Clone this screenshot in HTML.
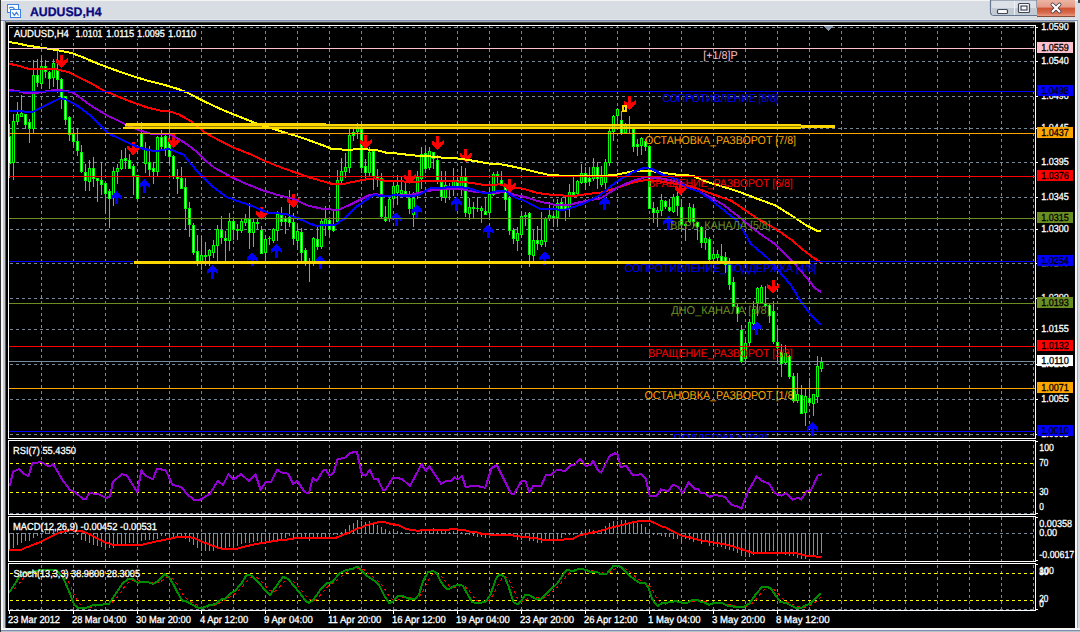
<!DOCTYPE html>
<html><head><meta charset="utf-8"><style>
html,body{margin:0;padding:0;background:#000;width:1080px;height:632px;overflow:hidden}
svg{position:absolute;left:0;top:0;font-family:"Liberation Sans", sans-serif;text-rendering:geometricPrecision}
</style></head><body>
<svg width="1080" height="632" viewBox="0 0 1080 632" shape-rendering="crispEdges">
<defs><clipPath id="mainclip"><rect x="9" y="26" width="1026" height="412"/></clipPath><clipPath id="rsiclip"><rect x="9" y="441" width="1026" height="73"/></clipPath><clipPath id="macdclip"><rect x="9" y="517" width="1026" height="44"/></clipPath><clipPath id="stoclip"><rect x="9" y="564" width="1026" height="46"/></clipPath></defs>
<rect x="0" y="0" width="1080" height="632" fill="#000"/>
<line x1="41.5" y1="26" x2="41.5" y2="438" stroke="#778899" stroke-width="1" stroke-dasharray="3 3" stroke-dashoffset="1"/>
<line x1="41.5" y1="441" x2="41.5" y2="514" stroke="#778899" stroke-width="1" stroke-dasharray="3 3" stroke-dashoffset="2"/>
<line x1="41.5" y1="517" x2="41.5" y2="561" stroke="#778899" stroke-width="1" stroke-dasharray="3 3" stroke-dashoffset="0"/>
<line x1="41.5" y1="564" x2="41.5" y2="610" stroke="#778899" stroke-width="1" stroke-dasharray="3 3" stroke-dashoffset="5"/>
<line x1="73.5" y1="26" x2="73.5" y2="438" stroke="#778899" stroke-width="1" stroke-dasharray="3 3" stroke-dashoffset="1"/>
<line x1="73.5" y1="441" x2="73.5" y2="514" stroke="#778899" stroke-width="1" stroke-dasharray="3 3" stroke-dashoffset="2"/>
<line x1="73.5" y1="517" x2="73.5" y2="561" stroke="#778899" stroke-width="1" stroke-dasharray="3 3" stroke-dashoffset="0"/>
<line x1="73.5" y1="564" x2="73.5" y2="610" stroke="#778899" stroke-width="1" stroke-dasharray="3 3" stroke-dashoffset="5"/>
<line x1="105.5" y1="26" x2="105.5" y2="438" stroke="#778899" stroke-width="1" stroke-dasharray="3 3" stroke-dashoffset="1"/>
<line x1="105.5" y1="441" x2="105.5" y2="514" stroke="#778899" stroke-width="1" stroke-dasharray="3 3" stroke-dashoffset="2"/>
<line x1="105.5" y1="517" x2="105.5" y2="561" stroke="#778899" stroke-width="1" stroke-dasharray="3 3" stroke-dashoffset="0"/>
<line x1="105.5" y1="564" x2="105.5" y2="610" stroke="#778899" stroke-width="1" stroke-dasharray="3 3" stroke-dashoffset="5"/>
<line x1="137.5" y1="26" x2="137.5" y2="438" stroke="#778899" stroke-width="1" stroke-dasharray="3 3" stroke-dashoffset="1"/>
<line x1="137.5" y1="441" x2="137.5" y2="514" stroke="#778899" stroke-width="1" stroke-dasharray="3 3" stroke-dashoffset="2"/>
<line x1="137.5" y1="517" x2="137.5" y2="561" stroke="#778899" stroke-width="1" stroke-dasharray="3 3" stroke-dashoffset="0"/>
<line x1="137.5" y1="564" x2="137.5" y2="610" stroke="#778899" stroke-width="1" stroke-dasharray="3 3" stroke-dashoffset="5"/>
<line x1="169.5" y1="26" x2="169.5" y2="438" stroke="#778899" stroke-width="1" stroke-dasharray="3 3" stroke-dashoffset="1"/>
<line x1="169.5" y1="441" x2="169.5" y2="514" stroke="#778899" stroke-width="1" stroke-dasharray="3 3" stroke-dashoffset="2"/>
<line x1="169.5" y1="517" x2="169.5" y2="561" stroke="#778899" stroke-width="1" stroke-dasharray="3 3" stroke-dashoffset="0"/>
<line x1="169.5" y1="564" x2="169.5" y2="610" stroke="#778899" stroke-width="1" stroke-dasharray="3 3" stroke-dashoffset="5"/>
<line x1="201.5" y1="26" x2="201.5" y2="438" stroke="#778899" stroke-width="1" stroke-dasharray="3 3" stroke-dashoffset="1"/>
<line x1="201.5" y1="441" x2="201.5" y2="514" stroke="#778899" stroke-width="1" stroke-dasharray="3 3" stroke-dashoffset="2"/>
<line x1="201.5" y1="517" x2="201.5" y2="561" stroke="#778899" stroke-width="1" stroke-dasharray="3 3" stroke-dashoffset="0"/>
<line x1="201.5" y1="564" x2="201.5" y2="610" stroke="#778899" stroke-width="1" stroke-dasharray="3 3" stroke-dashoffset="5"/>
<line x1="233.5" y1="26" x2="233.5" y2="438" stroke="#778899" stroke-width="1" stroke-dasharray="3 3" stroke-dashoffset="1"/>
<line x1="233.5" y1="441" x2="233.5" y2="514" stroke="#778899" stroke-width="1" stroke-dasharray="3 3" stroke-dashoffset="2"/>
<line x1="233.5" y1="517" x2="233.5" y2="561" stroke="#778899" stroke-width="1" stroke-dasharray="3 3" stroke-dashoffset="0"/>
<line x1="233.5" y1="564" x2="233.5" y2="610" stroke="#778899" stroke-width="1" stroke-dasharray="3 3" stroke-dashoffset="5"/>
<line x1="265.5" y1="26" x2="265.5" y2="438" stroke="#778899" stroke-width="1" stroke-dasharray="3 3" stroke-dashoffset="1"/>
<line x1="265.5" y1="441" x2="265.5" y2="514" stroke="#778899" stroke-width="1" stroke-dasharray="3 3" stroke-dashoffset="2"/>
<line x1="265.5" y1="517" x2="265.5" y2="561" stroke="#778899" stroke-width="1" stroke-dasharray="3 3" stroke-dashoffset="0"/>
<line x1="265.5" y1="564" x2="265.5" y2="610" stroke="#778899" stroke-width="1" stroke-dasharray="3 3" stroke-dashoffset="5"/>
<line x1="297.5" y1="26" x2="297.5" y2="438" stroke="#778899" stroke-width="1" stroke-dasharray="3 3" stroke-dashoffset="1"/>
<line x1="297.5" y1="441" x2="297.5" y2="514" stroke="#778899" stroke-width="1" stroke-dasharray="3 3" stroke-dashoffset="2"/>
<line x1="297.5" y1="517" x2="297.5" y2="561" stroke="#778899" stroke-width="1" stroke-dasharray="3 3" stroke-dashoffset="0"/>
<line x1="297.5" y1="564" x2="297.5" y2="610" stroke="#778899" stroke-width="1" stroke-dasharray="3 3" stroke-dashoffset="5"/>
<line x1="329.5" y1="26" x2="329.5" y2="438" stroke="#778899" stroke-width="1" stroke-dasharray="3 3" stroke-dashoffset="1"/>
<line x1="329.5" y1="441" x2="329.5" y2="514" stroke="#778899" stroke-width="1" stroke-dasharray="3 3" stroke-dashoffset="2"/>
<line x1="329.5" y1="517" x2="329.5" y2="561" stroke="#778899" stroke-width="1" stroke-dasharray="3 3" stroke-dashoffset="0"/>
<line x1="329.5" y1="564" x2="329.5" y2="610" stroke="#778899" stroke-width="1" stroke-dasharray="3 3" stroke-dashoffset="5"/>
<line x1="361.5" y1="26" x2="361.5" y2="438" stroke="#778899" stroke-width="1" stroke-dasharray="3 3" stroke-dashoffset="1"/>
<line x1="361.5" y1="441" x2="361.5" y2="514" stroke="#778899" stroke-width="1" stroke-dasharray="3 3" stroke-dashoffset="2"/>
<line x1="361.5" y1="517" x2="361.5" y2="561" stroke="#778899" stroke-width="1" stroke-dasharray="3 3" stroke-dashoffset="0"/>
<line x1="361.5" y1="564" x2="361.5" y2="610" stroke="#778899" stroke-width="1" stroke-dasharray="3 3" stroke-dashoffset="5"/>
<line x1="393.5" y1="26" x2="393.5" y2="438" stroke="#778899" stroke-width="1" stroke-dasharray="3 3" stroke-dashoffset="1"/>
<line x1="393.5" y1="441" x2="393.5" y2="514" stroke="#778899" stroke-width="1" stroke-dasharray="3 3" stroke-dashoffset="2"/>
<line x1="393.5" y1="517" x2="393.5" y2="561" stroke="#778899" stroke-width="1" stroke-dasharray="3 3" stroke-dashoffset="0"/>
<line x1="393.5" y1="564" x2="393.5" y2="610" stroke="#778899" stroke-width="1" stroke-dasharray="3 3" stroke-dashoffset="5"/>
<line x1="425.5" y1="26" x2="425.5" y2="438" stroke="#778899" stroke-width="1" stroke-dasharray="3 3" stroke-dashoffset="1"/>
<line x1="425.5" y1="441" x2="425.5" y2="514" stroke="#778899" stroke-width="1" stroke-dasharray="3 3" stroke-dashoffset="2"/>
<line x1="425.5" y1="517" x2="425.5" y2="561" stroke="#778899" stroke-width="1" stroke-dasharray="3 3" stroke-dashoffset="0"/>
<line x1="425.5" y1="564" x2="425.5" y2="610" stroke="#778899" stroke-width="1" stroke-dasharray="3 3" stroke-dashoffset="5"/>
<line x1="457.5" y1="26" x2="457.5" y2="438" stroke="#778899" stroke-width="1" stroke-dasharray="3 3" stroke-dashoffset="1"/>
<line x1="457.5" y1="441" x2="457.5" y2="514" stroke="#778899" stroke-width="1" stroke-dasharray="3 3" stroke-dashoffset="2"/>
<line x1="457.5" y1="517" x2="457.5" y2="561" stroke="#778899" stroke-width="1" stroke-dasharray="3 3" stroke-dashoffset="0"/>
<line x1="457.5" y1="564" x2="457.5" y2="610" stroke="#778899" stroke-width="1" stroke-dasharray="3 3" stroke-dashoffset="5"/>
<line x1="489.5" y1="26" x2="489.5" y2="438" stroke="#778899" stroke-width="1" stroke-dasharray="3 3" stroke-dashoffset="1"/>
<line x1="489.5" y1="441" x2="489.5" y2="514" stroke="#778899" stroke-width="1" stroke-dasharray="3 3" stroke-dashoffset="2"/>
<line x1="489.5" y1="517" x2="489.5" y2="561" stroke="#778899" stroke-width="1" stroke-dasharray="3 3" stroke-dashoffset="0"/>
<line x1="489.5" y1="564" x2="489.5" y2="610" stroke="#778899" stroke-width="1" stroke-dasharray="3 3" stroke-dashoffset="5"/>
<line x1="521.5" y1="26" x2="521.5" y2="438" stroke="#778899" stroke-width="1" stroke-dasharray="3 3" stroke-dashoffset="1"/>
<line x1="521.5" y1="441" x2="521.5" y2="514" stroke="#778899" stroke-width="1" stroke-dasharray="3 3" stroke-dashoffset="2"/>
<line x1="521.5" y1="517" x2="521.5" y2="561" stroke="#778899" stroke-width="1" stroke-dasharray="3 3" stroke-dashoffset="0"/>
<line x1="521.5" y1="564" x2="521.5" y2="610" stroke="#778899" stroke-width="1" stroke-dasharray="3 3" stroke-dashoffset="5"/>
<line x1="553.5" y1="26" x2="553.5" y2="438" stroke="#778899" stroke-width="1" stroke-dasharray="3 3" stroke-dashoffset="1"/>
<line x1="553.5" y1="441" x2="553.5" y2="514" stroke="#778899" stroke-width="1" stroke-dasharray="3 3" stroke-dashoffset="2"/>
<line x1="553.5" y1="517" x2="553.5" y2="561" stroke="#778899" stroke-width="1" stroke-dasharray="3 3" stroke-dashoffset="0"/>
<line x1="553.5" y1="564" x2="553.5" y2="610" stroke="#778899" stroke-width="1" stroke-dasharray="3 3" stroke-dashoffset="5"/>
<line x1="585.5" y1="26" x2="585.5" y2="438" stroke="#778899" stroke-width="1" stroke-dasharray="3 3" stroke-dashoffset="1"/>
<line x1="585.5" y1="441" x2="585.5" y2="514" stroke="#778899" stroke-width="1" stroke-dasharray="3 3" stroke-dashoffset="2"/>
<line x1="585.5" y1="517" x2="585.5" y2="561" stroke="#778899" stroke-width="1" stroke-dasharray="3 3" stroke-dashoffset="0"/>
<line x1="585.5" y1="564" x2="585.5" y2="610" stroke="#778899" stroke-width="1" stroke-dasharray="3 3" stroke-dashoffset="5"/>
<line x1="617.5" y1="26" x2="617.5" y2="438" stroke="#778899" stroke-width="1" stroke-dasharray="3 3" stroke-dashoffset="1"/>
<line x1="617.5" y1="441" x2="617.5" y2="514" stroke="#778899" stroke-width="1" stroke-dasharray="3 3" stroke-dashoffset="2"/>
<line x1="617.5" y1="517" x2="617.5" y2="561" stroke="#778899" stroke-width="1" stroke-dasharray="3 3" stroke-dashoffset="0"/>
<line x1="617.5" y1="564" x2="617.5" y2="610" stroke="#778899" stroke-width="1" stroke-dasharray="3 3" stroke-dashoffset="5"/>
<line x1="649.5" y1="26" x2="649.5" y2="438" stroke="#778899" stroke-width="1" stroke-dasharray="3 3" stroke-dashoffset="1"/>
<line x1="649.5" y1="441" x2="649.5" y2="514" stroke="#778899" stroke-width="1" stroke-dasharray="3 3" stroke-dashoffset="2"/>
<line x1="649.5" y1="517" x2="649.5" y2="561" stroke="#778899" stroke-width="1" stroke-dasharray="3 3" stroke-dashoffset="0"/>
<line x1="649.5" y1="564" x2="649.5" y2="610" stroke="#778899" stroke-width="1" stroke-dasharray="3 3" stroke-dashoffset="5"/>
<line x1="681.5" y1="26" x2="681.5" y2="438" stroke="#778899" stroke-width="1" stroke-dasharray="3 3" stroke-dashoffset="1"/>
<line x1="681.5" y1="441" x2="681.5" y2="514" stroke="#778899" stroke-width="1" stroke-dasharray="3 3" stroke-dashoffset="2"/>
<line x1="681.5" y1="517" x2="681.5" y2="561" stroke="#778899" stroke-width="1" stroke-dasharray="3 3" stroke-dashoffset="0"/>
<line x1="681.5" y1="564" x2="681.5" y2="610" stroke="#778899" stroke-width="1" stroke-dasharray="3 3" stroke-dashoffset="5"/>
<line x1="713.5" y1="26" x2="713.5" y2="438" stroke="#778899" stroke-width="1" stroke-dasharray="3 3" stroke-dashoffset="1"/>
<line x1="713.5" y1="441" x2="713.5" y2="514" stroke="#778899" stroke-width="1" stroke-dasharray="3 3" stroke-dashoffset="2"/>
<line x1="713.5" y1="517" x2="713.5" y2="561" stroke="#778899" stroke-width="1" stroke-dasharray="3 3" stroke-dashoffset="0"/>
<line x1="713.5" y1="564" x2="713.5" y2="610" stroke="#778899" stroke-width="1" stroke-dasharray="3 3" stroke-dashoffset="5"/>
<line x1="745.5" y1="26" x2="745.5" y2="438" stroke="#778899" stroke-width="1" stroke-dasharray="3 3" stroke-dashoffset="1"/>
<line x1="745.5" y1="441" x2="745.5" y2="514" stroke="#778899" stroke-width="1" stroke-dasharray="3 3" stroke-dashoffset="2"/>
<line x1="745.5" y1="517" x2="745.5" y2="561" stroke="#778899" stroke-width="1" stroke-dasharray="3 3" stroke-dashoffset="0"/>
<line x1="745.5" y1="564" x2="745.5" y2="610" stroke="#778899" stroke-width="1" stroke-dasharray="3 3" stroke-dashoffset="5"/>
<line x1="777.5" y1="26" x2="777.5" y2="438" stroke="#778899" stroke-width="1" stroke-dasharray="3 3" stroke-dashoffset="1"/>
<line x1="777.5" y1="441" x2="777.5" y2="514" stroke="#778899" stroke-width="1" stroke-dasharray="3 3" stroke-dashoffset="2"/>
<line x1="777.5" y1="517" x2="777.5" y2="561" stroke="#778899" stroke-width="1" stroke-dasharray="3 3" stroke-dashoffset="0"/>
<line x1="777.5" y1="564" x2="777.5" y2="610" stroke="#778899" stroke-width="1" stroke-dasharray="3 3" stroke-dashoffset="5"/>
<line x1="809.5" y1="26" x2="809.5" y2="438" stroke="#778899" stroke-width="1" stroke-dasharray="3 3" stroke-dashoffset="1"/>
<line x1="809.5" y1="441" x2="809.5" y2="514" stroke="#778899" stroke-width="1" stroke-dasharray="3 3" stroke-dashoffset="2"/>
<line x1="809.5" y1="517" x2="809.5" y2="561" stroke="#778899" stroke-width="1" stroke-dasharray="3 3" stroke-dashoffset="0"/>
<line x1="809.5" y1="564" x2="809.5" y2="610" stroke="#778899" stroke-width="1" stroke-dasharray="3 3" stroke-dashoffset="5"/>
<line x1="841.5" y1="26" x2="841.5" y2="438" stroke="#778899" stroke-width="1" stroke-dasharray="3 3" stroke-dashoffset="1"/>
<line x1="841.5" y1="441" x2="841.5" y2="514" stroke="#778899" stroke-width="1" stroke-dasharray="3 3" stroke-dashoffset="2"/>
<line x1="841.5" y1="517" x2="841.5" y2="561" stroke="#778899" stroke-width="1" stroke-dasharray="3 3" stroke-dashoffset="0"/>
<line x1="841.5" y1="564" x2="841.5" y2="610" stroke="#778899" stroke-width="1" stroke-dasharray="3 3" stroke-dashoffset="5"/>
<line x1="873.5" y1="26" x2="873.5" y2="438" stroke="#778899" stroke-width="1" stroke-dasharray="3 3" stroke-dashoffset="1"/>
<line x1="873.5" y1="441" x2="873.5" y2="514" stroke="#778899" stroke-width="1" stroke-dasharray="3 3" stroke-dashoffset="2"/>
<line x1="873.5" y1="517" x2="873.5" y2="561" stroke="#778899" stroke-width="1" stroke-dasharray="3 3" stroke-dashoffset="0"/>
<line x1="873.5" y1="564" x2="873.5" y2="610" stroke="#778899" stroke-width="1" stroke-dasharray="3 3" stroke-dashoffset="5"/>
<line x1="905.5" y1="26" x2="905.5" y2="438" stroke="#778899" stroke-width="1" stroke-dasharray="3 3" stroke-dashoffset="1"/>
<line x1="905.5" y1="441" x2="905.5" y2="514" stroke="#778899" stroke-width="1" stroke-dasharray="3 3" stroke-dashoffset="2"/>
<line x1="905.5" y1="517" x2="905.5" y2="561" stroke="#778899" stroke-width="1" stroke-dasharray="3 3" stroke-dashoffset="0"/>
<line x1="905.5" y1="564" x2="905.5" y2="610" stroke="#778899" stroke-width="1" stroke-dasharray="3 3" stroke-dashoffset="5"/>
<line x1="937.5" y1="26" x2="937.5" y2="438" stroke="#778899" stroke-width="1" stroke-dasharray="3 3" stroke-dashoffset="1"/>
<line x1="937.5" y1="441" x2="937.5" y2="514" stroke="#778899" stroke-width="1" stroke-dasharray="3 3" stroke-dashoffset="2"/>
<line x1="937.5" y1="517" x2="937.5" y2="561" stroke="#778899" stroke-width="1" stroke-dasharray="3 3" stroke-dashoffset="0"/>
<line x1="937.5" y1="564" x2="937.5" y2="610" stroke="#778899" stroke-width="1" stroke-dasharray="3 3" stroke-dashoffset="5"/>
<line x1="969.5" y1="26" x2="969.5" y2="438" stroke="#778899" stroke-width="1" stroke-dasharray="3 3" stroke-dashoffset="1"/>
<line x1="969.5" y1="441" x2="969.5" y2="514" stroke="#778899" stroke-width="1" stroke-dasharray="3 3" stroke-dashoffset="2"/>
<line x1="969.5" y1="517" x2="969.5" y2="561" stroke="#778899" stroke-width="1" stroke-dasharray="3 3" stroke-dashoffset="0"/>
<line x1="969.5" y1="564" x2="969.5" y2="610" stroke="#778899" stroke-width="1" stroke-dasharray="3 3" stroke-dashoffset="5"/>
<line x1="1001.5" y1="26" x2="1001.5" y2="438" stroke="#778899" stroke-width="1" stroke-dasharray="3 3" stroke-dashoffset="1"/>
<line x1="1001.5" y1="441" x2="1001.5" y2="514" stroke="#778899" stroke-width="1" stroke-dasharray="3 3" stroke-dashoffset="2"/>
<line x1="1001.5" y1="517" x2="1001.5" y2="561" stroke="#778899" stroke-width="1" stroke-dasharray="3 3" stroke-dashoffset="0"/>
<line x1="1001.5" y1="564" x2="1001.5" y2="610" stroke="#778899" stroke-width="1" stroke-dasharray="3 3" stroke-dashoffset="5"/>
<line x1="1033.5" y1="26" x2="1033.5" y2="438" stroke="#778899" stroke-width="1" stroke-dasharray="3 3" stroke-dashoffset="1"/>
<line x1="1033.5" y1="441" x2="1033.5" y2="514" stroke="#778899" stroke-width="1" stroke-dasharray="3 3" stroke-dashoffset="2"/>
<line x1="1033.5" y1="517" x2="1033.5" y2="561" stroke="#778899" stroke-width="1" stroke-dasharray="3 3" stroke-dashoffset="0"/>
<line x1="1033.5" y1="564" x2="1033.5" y2="610" stroke="#778899" stroke-width="1" stroke-dasharray="3 3" stroke-dashoffset="5"/>
<line x1="9" y1="27.5" x2="1035" y2="27.5" stroke="#778899" stroke-width="1" stroke-dasharray="3 3" stroke-dashoffset="5"/>
<line x1="9" y1="61.5" x2="1035" y2="61.5" stroke="#778899" stroke-width="1" stroke-dasharray="3 3" stroke-dashoffset="5"/>
<line x1="9" y1="96.5" x2="1035" y2="96.5" stroke="#778899" stroke-width="1" stroke-dasharray="3 3" stroke-dashoffset="5"/>
<line x1="9" y1="128.5" x2="1035" y2="128.5" stroke="#778899" stroke-width="1" stroke-dasharray="3 3" stroke-dashoffset="5"/>
<line x1="9" y1="162.5" x2="1035" y2="162.5" stroke="#778899" stroke-width="1" stroke-dasharray="3 3" stroke-dashoffset="5"/>
<line x1="9" y1="197.5" x2="1035" y2="197.5" stroke="#778899" stroke-width="1" stroke-dasharray="3 3" stroke-dashoffset="5"/>
<line x1="9" y1="229.5" x2="1035" y2="229.5" stroke="#778899" stroke-width="1" stroke-dasharray="3 3" stroke-dashoffset="5"/>
<line x1="9" y1="263.5" x2="1035" y2="263.5" stroke="#778899" stroke-width="1" stroke-dasharray="3 3" stroke-dashoffset="5"/>
<line x1="9" y1="298.5" x2="1035" y2="298.5" stroke="#778899" stroke-width="1" stroke-dasharray="3 3" stroke-dashoffset="5"/>
<line x1="9" y1="329.5" x2="1035" y2="329.5" stroke="#778899" stroke-width="1" stroke-dasharray="3 3" stroke-dashoffset="5"/>
<line x1="9" y1="364.5" x2="1035" y2="364.5" stroke="#778899" stroke-width="1" stroke-dasharray="3 3" stroke-dashoffset="5"/>
<line x1="9" y1="399.5" x2="1035" y2="399.5" stroke="#778899" stroke-width="1" stroke-dasharray="3 3" stroke-dashoffset="5"/>
<line x1="9" y1="434.5" x2="1035" y2="434.5" stroke="#778899" stroke-width="1" stroke-dasharray="3 3" stroke-dashoffset="5"/>
<line x1="9" y1="513.5" x2="1035" y2="513.5" stroke="#778899" stroke-width="1" stroke-dasharray="3 3" stroke-dashoffset="5"/>
<line x1="9" y1="533.5" x2="1035" y2="533.5" stroke="#778899" stroke-width="1" stroke-dasharray="3 3" stroke-dashoffset="5"/>
<line x1="9" y1="609.5" x2="1035" y2="609.5" stroke="#778899" stroke-width="1" stroke-dasharray="3 3" stroke-dashoffset="5"/>
<line x1="9" y1="463.5" x2="1035" y2="463.5" stroke="#FFFF00" stroke-width="1" stroke-dasharray="3 3" stroke-dashoffset="5"/>
<line x1="9" y1="492.5" x2="1035" y2="492.5" stroke="#FFFF00" stroke-width="1" stroke-dasharray="3 3" stroke-dashoffset="5"/>
<line x1="9" y1="573.5" x2="1035" y2="573.5" stroke="#FFFF00" stroke-width="1" stroke-dasharray="3 3" stroke-dashoffset="5"/>
<line x1="9" y1="600.5" x2="1035" y2="600.5" stroke="#FFFF00" stroke-width="1" stroke-dasharray="3 3" stroke-dashoffset="5"/>
<line x1="9" y1="361.5" x2="1035" y2="361.5" stroke="#778899" stroke-width="1"/>
<line x1="1036" y1="27.5" x2="1038" y2="27.5" stroke="#FFFFFF" stroke-width="1"/>
<text x="1041.3" y="30" fill="#FFFFFF" font-size="10.2" font-weight="normal" text-anchor="start" textLength="27.6" lengthAdjust="spacingAndGlyphs" stroke="#FFFFFF" stroke-width="0.3">1.0590</text>
<line x1="1036" y1="61.5" x2="1038" y2="61.5" stroke="#FFFFFF" stroke-width="1"/>
<text x="1041.3" y="64" fill="#FFFFFF" font-size="10.2" font-weight="normal" text-anchor="start" textLength="27.6" lengthAdjust="spacingAndGlyphs" stroke="#FFFFFF" stroke-width="0.3">1.0540</text>
<line x1="1036" y1="96.5" x2="1038" y2="96.5" stroke="#FFFFFF" stroke-width="1"/>
<text x="1041.3" y="99" fill="#FFFFFF" font-size="10.2" font-weight="normal" text-anchor="start" textLength="27.6" lengthAdjust="spacingAndGlyphs" stroke="#FFFFFF" stroke-width="0.3">1.0490</text>
<line x1="1036" y1="128.5" x2="1038" y2="128.5" stroke="#FFFFFF" stroke-width="1"/>
<text x="1041.3" y="131" fill="#FFFFFF" font-size="10.2" font-weight="normal" text-anchor="start" textLength="27.6" lengthAdjust="spacingAndGlyphs" stroke="#FFFFFF" stroke-width="0.3">1.0445</text>
<line x1="1036" y1="162.5" x2="1038" y2="162.5" stroke="#FFFFFF" stroke-width="1"/>
<text x="1041.3" y="165" fill="#FFFFFF" font-size="10.2" font-weight="normal" text-anchor="start" textLength="27.6" lengthAdjust="spacingAndGlyphs" stroke="#FFFFFF" stroke-width="0.3">1.0395</text>
<line x1="1036" y1="197.5" x2="1038" y2="197.5" stroke="#FFFFFF" stroke-width="1"/>
<text x="1041.3" y="200" fill="#FFFFFF" font-size="10.2" font-weight="normal" text-anchor="start" textLength="27.6" lengthAdjust="spacingAndGlyphs" stroke="#FFFFFF" stroke-width="0.3">1.0345</text>
<line x1="1036" y1="229.5" x2="1038" y2="229.5" stroke="#FFFFFF" stroke-width="1"/>
<text x="1041.3" y="232" fill="#FFFFFF" font-size="10.2" font-weight="normal" text-anchor="start" textLength="27.6" lengthAdjust="spacingAndGlyphs" stroke="#FFFFFF" stroke-width="0.3">1.0300</text>
<line x1="1036" y1="263.5" x2="1038" y2="263.5" stroke="#FFFFFF" stroke-width="1"/>
<text x="1041.3" y="266" fill="#FFFFFF" font-size="10.2" font-weight="normal" text-anchor="start" textLength="27.6" lengthAdjust="spacingAndGlyphs" stroke="#FFFFFF" stroke-width="0.3">1.0250</text>
<line x1="1036" y1="298.5" x2="1038" y2="298.5" stroke="#FFFFFF" stroke-width="1"/>
<text x="1041.3" y="301" fill="#FFFFFF" font-size="10.2" font-weight="normal" text-anchor="start" textLength="27.6" lengthAdjust="spacingAndGlyphs" stroke="#FFFFFF" stroke-width="0.3">1.0200</text>
<line x1="1036" y1="329.5" x2="1038" y2="329.5" stroke="#FFFFFF" stroke-width="1"/>
<text x="1041.3" y="332" fill="#FFFFFF" font-size="10.2" font-weight="normal" text-anchor="start" textLength="27.6" lengthAdjust="spacingAndGlyphs" stroke="#FFFFFF" stroke-width="0.3">1.0155</text>
<line x1="1036" y1="364.5" x2="1038" y2="364.5" stroke="#FFFFFF" stroke-width="1"/>
<text x="1041.3" y="367" fill="#FFFFFF" font-size="10.2" font-weight="normal" text-anchor="start" textLength="27.6" lengthAdjust="spacingAndGlyphs" stroke="#FFFFFF" stroke-width="0.3">1.0105</text>
<line x1="1036" y1="399.5" x2="1038" y2="399.5" stroke="#FFFFFF" stroke-width="1"/>
<text x="1041.3" y="402" fill="#FFFFFF" font-size="10.2" font-weight="normal" text-anchor="start" textLength="27.6" lengthAdjust="spacingAndGlyphs" stroke="#FFFFFF" stroke-width="0.3">1.0055</text>
<line x1="1036" y1="434.5" x2="1038" y2="434.5" stroke="#FFFFFF" stroke-width="1"/>
<text x="1041.3" y="437" fill="#FFFFFF" font-size="10.2" font-weight="normal" text-anchor="start" textLength="27.6" lengthAdjust="spacingAndGlyphs" stroke="#FFFFFF" stroke-width="0.3">1.0005</text>
<rect x="1037" y="42" width="36" height="11" fill="#FFC0CB"/>
<text x="1041.3" y="51" fill="#000000" font-size="10.2" font-weight="normal" text-anchor="start" textLength="27.6" lengthAdjust="spacingAndGlyphs" stroke="#000000" stroke-width="0.3">1.0559</text>
<rect x="1037" y="85" width="36" height="11" fill="#0000FF"/>
<text x="1041.3" y="94" fill="#000000" font-size="10.2" font-weight="normal" text-anchor="start" textLength="27.6" lengthAdjust="spacingAndGlyphs" stroke="#000000" stroke-width="0.3">1.0498</text>
<rect x="1037" y="127" width="36" height="11" fill="#FFA500"/>
<text x="1041.3" y="136" fill="#000000" font-size="10.2" font-weight="normal" text-anchor="start" textLength="27.6" lengthAdjust="spacingAndGlyphs" stroke="#000000" stroke-width="0.3">1.0437</text>
<rect x="1037" y="170" width="36" height="11" fill="#FF0000"/>
<text x="1041.3" y="179" fill="#000000" font-size="10.2" font-weight="normal" text-anchor="start" textLength="27.6" lengthAdjust="spacingAndGlyphs" stroke="#000000" stroke-width="0.3">1.0376</text>
<rect x="1037" y="212" width="36" height="11" fill="#6B8E23"/>
<text x="1041.3" y="221" fill="#000000" font-size="10.2" font-weight="normal" text-anchor="start" textLength="27.6" lengthAdjust="spacingAndGlyphs" stroke="#000000" stroke-width="0.3">1.0315</text>
<rect x="1037" y="255" width="36" height="11" fill="#0000FF"/>
<text x="1041.3" y="264" fill="#000000" font-size="10.2" font-weight="normal" text-anchor="start" textLength="27.6" lengthAdjust="spacingAndGlyphs" stroke="#000000" stroke-width="0.3">1.0254</text>
<rect x="1037" y="297" width="36" height="11" fill="#6B8E23"/>
<text x="1041.3" y="306" fill="#000000" font-size="10.2" font-weight="normal" text-anchor="start" textLength="27.6" lengthAdjust="spacingAndGlyphs" stroke="#000000" stroke-width="0.3">1.0193</text>
<rect x="1037" y="340" width="36" height="11" fill="#FF0000"/>
<text x="1041.3" y="349" fill="#000000" font-size="10.2" font-weight="normal" text-anchor="start" textLength="27.6" lengthAdjust="spacingAndGlyphs" stroke="#000000" stroke-width="0.3">1.0132</text>
<rect x="1037" y="382" width="36" height="11" fill="#FFA500"/>
<text x="1041.3" y="391" fill="#000000" font-size="10.2" font-weight="normal" text-anchor="start" textLength="27.6" lengthAdjust="spacingAndGlyphs" stroke="#000000" stroke-width="0.3">1.0071</text>
<rect x="1037" y="425" width="36" height="11" fill="#0000FF"/>
<text x="1041.3" y="434" fill="#000000" font-size="10.2" font-weight="normal" text-anchor="start" textLength="27.6" lengthAdjust="spacingAndGlyphs" stroke="#000000" stroke-width="0.3">1.0010</text>
<rect x="1037" y="355" width="36" height="11" fill="#FFFFFF"/>
<text x="1041.3" y="364" fill="#000000" font-size="10.2" font-weight="normal" text-anchor="start" textLength="27.6" lengthAdjust="spacingAndGlyphs" stroke="#000000" stroke-width="0.3">1.0110</text>
<text x="1039.3" y="450.7" fill="#FFFFFF" font-size="10.2" font-weight="normal" text-anchor="start" textLength="14.5" lengthAdjust="spacingAndGlyphs" stroke="#FFFFFF" stroke-width="0.3">100</text>
<text x="1039.3" y="465.8" fill="#FFFFFF" font-size="10.2" font-weight="normal" text-anchor="start" textLength="9.1" lengthAdjust="spacingAndGlyphs" stroke="#FFFFFF" stroke-width="0.3">70</text>
<text x="1039.3" y="495" fill="#FFFFFF" font-size="10.2" font-weight="normal" text-anchor="start" textLength="9.1" lengthAdjust="spacingAndGlyphs" stroke="#FFFFFF" stroke-width="0.3">30</text>
<text x="1039.3" y="510.4" fill="#FFFFFF" font-size="10.2" font-weight="normal" text-anchor="start" textLength="4.6" lengthAdjust="spacingAndGlyphs" stroke="#FFFFFF" stroke-width="0.3">0</text>
<text x="1039.3" y="526.6" fill="#FFFFFF" font-size="10.2" font-weight="normal" text-anchor="start" textLength="32.8" lengthAdjust="spacingAndGlyphs" stroke="#FFFFFF" stroke-width="0.3">0.00358</text>
<text x="1039.3" y="535.7" fill="#FFFFFF" font-size="10.2" font-weight="normal" text-anchor="start" textLength="17.8" lengthAdjust="spacingAndGlyphs" stroke="#FFFFFF" stroke-width="0.3">0.00</text>
<text x="1039.3" y="557.6" fill="#FFFFFF" font-size="10.2" font-weight="normal" text-anchor="start" textLength="35" lengthAdjust="spacingAndGlyphs" stroke="#FFFFFF" stroke-width="0.3">-0.00617</text>
<text x="1039.3" y="573.7" fill="#FFFFFF" font-size="10.2" font-weight="normal" text-anchor="start" textLength="14.5" lengthAdjust="spacingAndGlyphs" stroke="#FFFFFF" stroke-width="0.3">100</text>
<text x="1039.3" y="575.3" fill="#FFFFFF" font-size="10.2" font-weight="normal" text-anchor="start" textLength="9.1" lengthAdjust="spacingAndGlyphs" stroke="#FFFFFF" stroke-width="0.3">80</text>
<text x="1039.3" y="602.4" fill="#FFFFFF" font-size="10.2" font-weight="normal" text-anchor="start" textLength="9.1" lengthAdjust="spacingAndGlyphs" stroke="#FFFFFF" stroke-width="0.3">20</text>
<text x="1039.3" y="606.5" fill="#FFFFFF" font-size="10.2" font-weight="normal" text-anchor="start" textLength="4.6" lengthAdjust="spacingAndGlyphs" stroke="#FFFFFF" stroke-width="0.3">0</text>
<line x1="1036" y1="441.5" x2="1038" y2="441.5" stroke="#FFFFFF" stroke-width="1"/>
<line x1="1036" y1="513.5" x2="1038" y2="513.5" stroke="#FFFFFF" stroke-width="1"/>
<line x1="1036" y1="517.5" x2="1038" y2="517.5" stroke="#FFFFFF" stroke-width="1"/>
<line x1="1036" y1="560.5" x2="1038" y2="560.5" stroke="#FFFFFF" stroke-width="1"/>
<line x1="1036" y1="564.5" x2="1038" y2="564.5" stroke="#FFFFFF" stroke-width="1"/>
<line x1="1036" y1="609.5" x2="1038" y2="609.5" stroke="#FFFFFF" stroke-width="1"/>
<line x1="9.5" y1="611" x2="9.5" y2="614" stroke="#FFFFFF" stroke-width="1"/>
<text x="8" y="622.8" fill="#FFFFFF" font-size="10.2" font-weight="normal" text-anchor="start" textLength="52" lengthAdjust="spacingAndGlyphs" stroke="#FFFFFF" stroke-width="0.3">23 Mar 2012</text>
<line x1="73.5" y1="611" x2="73.5" y2="614" stroke="#FFFFFF" stroke-width="1"/>
<text x="72" y="622.8" fill="#FFFFFF" font-size="10.2" font-weight="normal" text-anchor="start" textLength="54.5" lengthAdjust="spacingAndGlyphs" stroke="#FFFFFF" stroke-width="0.3">28 Mar 04:00</text>
<line x1="137.5" y1="611" x2="137.5" y2="614" stroke="#FFFFFF" stroke-width="1"/>
<text x="136" y="622.8" fill="#FFFFFF" font-size="10.2" font-weight="normal" text-anchor="start" textLength="55" lengthAdjust="spacingAndGlyphs" stroke="#FFFFFF" stroke-width="0.3">30 Mar 20:00</text>
<line x1="201.5" y1="611" x2="201.5" y2="614" stroke="#FFFFFF" stroke-width="1"/>
<text x="200" y="622.8" fill="#FFFFFF" font-size="10.2" font-weight="normal" text-anchor="start" textLength="48.2" lengthAdjust="spacingAndGlyphs" stroke="#FFFFFF" stroke-width="0.3">4 Apr 12:00</text>
<line x1="265.5" y1="611" x2="265.5" y2="614" stroke="#FFFFFF" stroke-width="1"/>
<text x="264" y="622.8" fill="#FFFFFF" font-size="10.2" font-weight="normal" text-anchor="start" textLength="48.75" lengthAdjust="spacingAndGlyphs" stroke="#FFFFFF" stroke-width="0.3">9 Apr 04:00</text>
<line x1="329.5" y1="611" x2="329.5" y2="614" stroke="#FFFFFF" stroke-width="1"/>
<text x="328" y="622.8" fill="#FFFFFF" font-size="10.2" font-weight="normal" text-anchor="start" textLength="53.25" lengthAdjust="spacingAndGlyphs" stroke="#FFFFFF" stroke-width="0.3">11 Apr 20:00</text>
<line x1="393.5" y1="611" x2="393.5" y2="614" stroke="#FFFFFF" stroke-width="1"/>
<text x="392" y="622.8" fill="#FFFFFF" font-size="10.2" font-weight="normal" text-anchor="start" textLength="53.75" lengthAdjust="spacingAndGlyphs" stroke="#FFFFFF" stroke-width="0.3">16 Apr 12:00</text>
<line x1="457.5" y1="611" x2="457.5" y2="614" stroke="#FFFFFF" stroke-width="1"/>
<text x="456" y="622.8" fill="#FFFFFF" font-size="10.2" font-weight="normal" text-anchor="start" textLength="53.75" lengthAdjust="spacingAndGlyphs" stroke="#FFFFFF" stroke-width="0.3">19 Apr 04:00</text>
<line x1="521.5" y1="611" x2="521.5" y2="614" stroke="#FFFFFF" stroke-width="1"/>
<text x="520" y="622.8" fill="#FFFFFF" font-size="10.2" font-weight="normal" text-anchor="start" textLength="54" lengthAdjust="spacingAndGlyphs" stroke="#FFFFFF" stroke-width="0.3">23 Apr 20:00</text>
<line x1="585.5" y1="611" x2="585.5" y2="614" stroke="#FFFFFF" stroke-width="1"/>
<text x="584" y="622.8" fill="#FFFFFF" font-size="10.2" font-weight="normal" text-anchor="start" textLength="53.5" lengthAdjust="spacingAndGlyphs" stroke="#FFFFFF" stroke-width="0.3">26 Apr 12:00</text>
<line x1="649.5" y1="611" x2="649.5" y2="614" stroke="#FFFFFF" stroke-width="1"/>
<text x="648" y="622.8" fill="#FFFFFF" font-size="10.2" font-weight="normal" text-anchor="start" textLength="52.6" lengthAdjust="spacingAndGlyphs" stroke="#FFFFFF" stroke-width="0.3">1 May 04:00</text>
<line x1="713.5" y1="611" x2="713.5" y2="614" stroke="#FFFFFF" stroke-width="1"/>
<text x="712" y="622.8" fill="#FFFFFF" font-size="10.2" font-weight="normal" text-anchor="start" textLength="53" lengthAdjust="spacingAndGlyphs" stroke="#FFFFFF" stroke-width="0.3">3 May 20:00</text>
<line x1="777.5" y1="611" x2="777.5" y2="614" stroke="#FFFFFF" stroke-width="1"/>
<text x="776" y="622.8" fill="#FFFFFF" font-size="10.2" font-weight="normal" text-anchor="start" textLength="53.6" lengthAdjust="spacingAndGlyphs" stroke="#FFFFFF" stroke-width="0.3">8 May 12:00</text>
<rect x="9" y="124" width="1" height="54" fill="#00FF00"/>
<rect x="8" y="136" width="3" height="28" fill="#00FF00"/>
<rect x="9" y="137" width="1" height="26" fill="#FFFFFF"/>
<rect x="13" y="114" width="1" height="66" fill="#00FF00"/>
<rect x="12" y="121" width="3" height="42" fill="#00FF00"/>
<rect x="13" y="122" width="1" height="40" fill="#000000"/>
<rect x="17" y="102" width="1" height="23" fill="#00FF00"/>
<rect x="16" y="114" width="3" height="8" fill="#00FF00"/>
<rect x="17" y="115" width="1" height="6" fill="#000000"/>
<rect x="21" y="95" width="1" height="22" fill="#00FF00"/>
<rect x="20" y="113" width="3" height="4" fill="#00FF00"/>
<rect x="21" y="114" width="1" height="2" fill="#000000"/>
<rect x="25" y="114" width="1" height="15" fill="#00FF00"/>
<rect x="24" y="114" width="3" height="11" fill="#00FF00"/>
<rect x="25" y="115" width="1" height="9" fill="#FFFFFF"/>
<rect x="29" y="119" width="1" height="24" fill="#00FF00"/>
<rect x="28" y="122" width="3" height="7" fill="#00FF00"/>
<rect x="29" y="123" width="1" height="5" fill="#FFFFFF"/>
<rect x="33" y="60" width="1" height="73" fill="#00FF00"/>
<rect x="32" y="75" width="3" height="54" fill="#00FF00"/>
<rect x="33" y="76" width="1" height="52" fill="#000000"/>
<rect x="37" y="59" width="1" height="28" fill="#00FF00"/>
<rect x="36" y="75" width="3" height="8" fill="#00FF00"/>
<rect x="37" y="76" width="1" height="6" fill="#FFFFFF"/>
<rect x="41" y="58" width="1" height="31" fill="#00FF00"/>
<rect x="40" y="66" width="3" height="18" fill="#00FF00"/>
<rect x="41" y="67" width="1" height="16" fill="#000000"/>
<rect x="45" y="60" width="1" height="18" fill="#00FF00"/>
<rect x="44" y="66" width="3" height="6" fill="#00FF00"/>
<rect x="45" y="67" width="1" height="4" fill="#FFFFFF"/>
<rect x="49" y="71" width="1" height="18" fill="#00FF00"/>
<rect x="48" y="72" width="3" height="7" fill="#00FF00"/>
<rect x="49" y="73" width="1" height="5" fill="#FFFFFF"/>
<rect x="53" y="59" width="1" height="28" fill="#00FF00"/>
<rect x="52" y="63" width="3" height="15" fill="#00FF00"/>
<rect x="53" y="64" width="1" height="13" fill="#000000"/>
<rect x="57" y="50" width="1" height="43" fill="#00FF00"/>
<rect x="56" y="69" width="3" height="11" fill="#00FF00"/>
<rect x="57" y="70" width="1" height="9" fill="#FFFFFF"/>
<rect x="61" y="78" width="1" height="31" fill="#00FF00"/>
<rect x="60" y="79" width="3" height="19" fill="#00FF00"/>
<rect x="61" y="80" width="1" height="17" fill="#FFFFFF"/>
<rect x="65" y="96" width="1" height="29" fill="#00FF00"/>
<rect x="64" y="96" width="3" height="24" fill="#00FF00"/>
<rect x="65" y="97" width="1" height="22" fill="#FFFFFF"/>
<rect x="69" y="116" width="1" height="25" fill="#00FF00"/>
<rect x="68" y="117" width="3" height="18" fill="#00FF00"/>
<rect x="69" y="118" width="1" height="16" fill="#FFFFFF"/>
<rect x="73" y="127" width="1" height="20" fill="#00FF00"/>
<rect x="72" y="134" width="3" height="8" fill="#00FF00"/>
<rect x="73" y="135" width="1" height="6" fill="#FFFFFF"/>
<rect x="77" y="128" width="1" height="28" fill="#00FF00"/>
<rect x="76" y="141" width="3" height="10" fill="#00FF00"/>
<rect x="77" y="142" width="1" height="8" fill="#FFFFFF"/>
<rect x="81" y="145" width="1" height="28" fill="#00FF00"/>
<rect x="80" y="152" width="3" height="20" fill="#00FF00"/>
<rect x="81" y="153" width="1" height="18" fill="#FFFFFF"/>
<rect x="85" y="164" width="1" height="27" fill="#00FF00"/>
<rect x="84" y="172" width="3" height="9" fill="#00FF00"/>
<rect x="85" y="173" width="1" height="7" fill="#FFFFFF"/>
<rect x="89" y="160" width="1" height="31" fill="#00FF00"/>
<rect x="88" y="168" width="3" height="14" fill="#00FF00"/>
<rect x="89" y="169" width="1" height="12" fill="#000000"/>
<rect x="93" y="157" width="1" height="30" fill="#00FF00"/>
<rect x="92" y="168" width="3" height="11" fill="#00FF00"/>
<rect x="93" y="169" width="1" height="9" fill="#FFFFFF"/>
<rect x="97" y="178" width="1" height="24" fill="#00FF00"/>
<rect x="96" y="178" width="3" height="3" fill="#00FF00"/>
<rect x="97" y="179" width="1" height="1" fill="#FFFFFF"/>
<rect x="101" y="162" width="1" height="33" fill="#00FF00"/>
<rect x="100" y="180" width="3" height="5" fill="#00FF00"/>
<rect x="101" y="181" width="1" height="3" fill="#FFFFFF"/>
<rect x="105" y="183" width="1" height="31" fill="#00FF00"/>
<rect x="104" y="183" width="3" height="11" fill="#00FF00"/>
<rect x="105" y="184" width="1" height="9" fill="#FFFFFF"/>
<rect x="109" y="189" width="1" height="39" fill="#00FF00"/>
<rect x="108" y="191" width="3" height="8" fill="#00FF00"/>
<rect x="109" y="192" width="1" height="6" fill="#FFFFFF"/>
<rect x="113" y="167" width="1" height="39" fill="#00FF00"/>
<rect x="112" y="171" width="3" height="25" fill="#00FF00"/>
<rect x="113" y="172" width="1" height="23" fill="#000000"/>
<rect x="117" y="164" width="1" height="20" fill="#00FF00"/>
<rect x="116" y="168" width="3" height="4" fill="#00FF00"/>
<rect x="117" y="169" width="1" height="2" fill="#000000"/>
<rect x="121" y="150" width="1" height="20" fill="#00FF00"/>
<rect x="120" y="159" width="3" height="10" fill="#00FF00"/>
<rect x="121" y="160" width="1" height="8" fill="#000000"/>
<rect x="125" y="148" width="1" height="21" fill="#00FF00"/>
<rect x="124" y="158" width="3" height="3" fill="#00FF00"/>
<rect x="125" y="159" width="1" height="1" fill="#FFFFFF"/>
<rect x="129" y="154" width="1" height="15" fill="#00FF00"/>
<rect x="128" y="160" width="3" height="9" fill="#00FF00"/>
<rect x="129" y="161" width="1" height="7" fill="#FFFFFF"/>
<rect x="133" y="164" width="1" height="31" fill="#00FF00"/>
<rect x="132" y="166" width="3" height="10" fill="#00FF00"/>
<rect x="133" y="167" width="1" height="8" fill="#FFFFFF"/>
<rect x="137" y="175" width="1" height="25" fill="#00FF00"/>
<rect x="136" y="175" width="3" height="24" fill="#00FF00"/>
<rect x="137" y="176" width="1" height="22" fill="#FFFFFF"/>
<rect x="141" y="122" width="1" height="26" fill="#00FF00"/>
<rect x="140" y="133" width="3" height="14" fill="#00FF00"/>
<rect x="141" y="134" width="1" height="12" fill="#FFFFFF"/>
<rect x="145" y="142" width="1" height="31" fill="#00FF00"/>
<rect x="144" y="149" width="3" height="15" fill="#00FF00"/>
<rect x="145" y="150" width="1" height="13" fill="#000000"/>
<rect x="149" y="146" width="1" height="30" fill="#00FF00"/>
<rect x="148" y="162" width="3" height="8" fill="#00FF00"/>
<rect x="149" y="163" width="1" height="6" fill="#FFFFFF"/>
<rect x="153" y="162" width="1" height="22" fill="#00FF00"/>
<rect x="152" y="168" width="3" height="4" fill="#00FF00"/>
<rect x="153" y="169" width="1" height="2" fill="#FFFFFF"/>
<rect x="157" y="136" width="1" height="40" fill="#00FF00"/>
<rect x="156" y="137" width="3" height="35" fill="#00FF00"/>
<rect x="157" y="138" width="1" height="33" fill="#000000"/>
<rect x="161" y="130" width="1" height="19" fill="#00FF00"/>
<rect x="160" y="137" width="3" height="10" fill="#00FF00"/>
<rect x="161" y="138" width="1" height="8" fill="#FFFFFF"/>
<rect x="165" y="134" width="1" height="22" fill="#00FF00"/>
<rect x="164" y="136" width="3" height="13" fill="#00FF00"/>
<rect x="165" y="137" width="1" height="11" fill="#FFFFFF"/>
<rect x="169" y="112" width="1" height="52" fill="#00FF00"/>
<rect x="168" y="141" width="3" height="16" fill="#00FF00"/>
<rect x="169" y="142" width="1" height="14" fill="#FFFFFF"/>
<rect x="173" y="155" width="1" height="24" fill="#00FF00"/>
<rect x="172" y="156" width="3" height="21" fill="#00FF00"/>
<rect x="173" y="157" width="1" height="19" fill="#FFFFFF"/>
<rect x="177" y="169" width="1" height="25" fill="#00FF00"/>
<rect x="176" y="176" width="3" height="3" fill="#00FF00"/>
<rect x="177" y="177" width="1" height="1" fill="#FFFFFF"/>
<rect x="181" y="167" width="1" height="22" fill="#00FF00"/>
<rect x="180" y="178" width="3" height="11" fill="#00FF00"/>
<rect x="181" y="179" width="1" height="9" fill="#FFFFFF"/>
<rect x="185" y="178" width="1" height="52" fill="#00FF00"/>
<rect x="184" y="187" width="3" height="22" fill="#00FF00"/>
<rect x="185" y="188" width="1" height="20" fill="#FFFFFF"/>
<rect x="189" y="202" width="1" height="35" fill="#00FF00"/>
<rect x="188" y="208" width="3" height="17" fill="#00FF00"/>
<rect x="189" y="209" width="1" height="15" fill="#FFFFFF"/>
<rect x="193" y="223" width="1" height="32" fill="#00FF00"/>
<rect x="192" y="225" width="3" height="28" fill="#00FF00"/>
<rect x="193" y="226" width="1" height="26" fill="#FFFFFF"/>
<rect x="197" y="235" width="1" height="31" fill="#00FF00"/>
<rect x="196" y="251" width="3" height="11" fill="#00FF00"/>
<rect x="197" y="252" width="1" height="9" fill="#FFFFFF"/>
<rect x="201" y="236" width="1" height="34" fill="#00FF00"/>
<rect x="200" y="255" width="3" height="7" fill="#00FF00"/>
<rect x="201" y="256" width="1" height="5" fill="#000000"/>
<rect x="205" y="242" width="1" height="24" fill="#00FF00"/>
<rect x="204" y="255" width="3" height="2" fill="#00FF00"/>
<rect x="209" y="249" width="1" height="17" fill="#00FF00"/>
<rect x="208" y="250" width="3" height="6" fill="#00FF00"/>
<rect x="209" y="251" width="1" height="4" fill="#000000"/>
<rect x="213" y="240" width="1" height="18" fill="#00FF00"/>
<rect x="212" y="245" width="3" height="8" fill="#00FF00"/>
<rect x="213" y="246" width="1" height="6" fill="#000000"/>
<rect x="217" y="225" width="1" height="38" fill="#00FF00"/>
<rect x="216" y="229" width="3" height="17" fill="#00FF00"/>
<rect x="217" y="230" width="1" height="15" fill="#000000"/>
<rect x="221" y="216" width="1" height="28" fill="#00FF00"/>
<rect x="220" y="230" width="3" height="8" fill="#00FF00"/>
<rect x="221" y="231" width="1" height="6" fill="#FFFFFF"/>
<rect x="225" y="231" width="1" height="32" fill="#00FF00"/>
<rect x="224" y="238" width="3" height="3" fill="#00FF00"/>
<rect x="225" y="239" width="1" height="1" fill="#FFFFFF"/>
<rect x="229" y="213" width="1" height="38" fill="#00FF00"/>
<rect x="228" y="221" width="3" height="20" fill="#00FF00"/>
<rect x="229" y="222" width="1" height="18" fill="#000000"/>
<rect x="233" y="219" width="1" height="21" fill="#00FF00"/>
<rect x="232" y="221" width="3" height="9" fill="#00FF00"/>
<rect x="233" y="222" width="1" height="7" fill="#FFFFFF"/>
<rect x="237" y="224" width="1" height="16" fill="#00FF00"/>
<rect x="236" y="229" width="3" height="2" fill="#00FF00"/>
<rect x="241" y="218" width="1" height="15" fill="#00FF00"/>
<rect x="240" y="221" width="3" height="10" fill="#00FF00"/>
<rect x="241" y="222" width="1" height="8" fill="#000000"/>
<rect x="245" y="214" width="1" height="12" fill="#00FF00"/>
<rect x="244" y="219" width="3" height="4" fill="#00FF00"/>
<rect x="245" y="220" width="1" height="2" fill="#000000"/>
<rect x="249" y="203" width="1" height="46" fill="#00FF00"/>
<rect x="248" y="219" width="3" height="14" fill="#00FF00"/>
<rect x="249" y="220" width="1" height="12" fill="#FFFFFF"/>
<rect x="253" y="219" width="1" height="28" fill="#00FF00"/>
<rect x="252" y="222" width="3" height="11" fill="#00FF00"/>
<rect x="253" y="223" width="1" height="9" fill="#000000"/>
<rect x="257" y="219" width="1" height="10" fill="#00FF00"/>
<rect x="256" y="222" width="3" height="2" fill="#00FF00"/>
<rect x="261" y="226" width="1" height="28" fill="#00FF00"/>
<rect x="260" y="230" width="3" height="24" fill="#00FF00"/>
<rect x="261" y="231" width="1" height="22" fill="#FFFFFF"/>
<rect x="265" y="235" width="1" height="27" fill="#00FF00"/>
<rect x="264" y="239" width="3" height="14" fill="#00FF00"/>
<rect x="265" y="240" width="1" height="12" fill="#000000"/>
<rect x="269" y="236" width="1" height="9" fill="#00FF00"/>
<rect x="268" y="238" width="3" height="1" fill="#00FF00"/>
<rect x="273" y="228" width="1" height="15" fill="#00FF00"/>
<rect x="272" y="229" width="3" height="12" fill="#00FF00"/>
<rect x="273" y="230" width="1" height="10" fill="#000000"/>
<rect x="277" y="211" width="1" height="30" fill="#00FF00"/>
<rect x="276" y="214" width="3" height="17" fill="#00FF00"/>
<rect x="277" y="215" width="1" height="15" fill="#000000"/>
<rect x="281" y="207" width="1" height="19" fill="#00FF00"/>
<rect x="280" y="215" width="3" height="7" fill="#00FF00"/>
<rect x="281" y="216" width="1" height="5" fill="#FFFFFF"/>
<rect x="285" y="216" width="1" height="18" fill="#00FF00"/>
<rect x="284" y="218" width="3" height="4" fill="#00FF00"/>
<rect x="285" y="219" width="1" height="2" fill="#FFFFFF"/>
<rect x="289" y="190" width="1" height="37" fill="#00FF00"/>
<rect x="288" y="217" width="3" height="6" fill="#00FF00"/>
<rect x="289" y="218" width="1" height="4" fill="#FFFFFF"/>
<rect x="293" y="213" width="1" height="32" fill="#00FF00"/>
<rect x="292" y="222" width="3" height="17" fill="#00FF00"/>
<rect x="293" y="223" width="1" height="15" fill="#FFFFFF"/>
<rect x="297" y="224" width="1" height="26" fill="#00FF00"/>
<rect x="296" y="231" width="3" height="10" fill="#00FF00"/>
<rect x="297" y="232" width="1" height="8" fill="#000000"/>
<rect x="301" y="228" width="1" height="36" fill="#00FF00"/>
<rect x="300" y="232" width="3" height="21" fill="#00FF00"/>
<rect x="301" y="233" width="1" height="19" fill="#FFFFFF"/>
<rect x="305" y="248" width="1" height="18" fill="#00FF00"/>
<rect x="304" y="250" width="3" height="12" fill="#00FF00"/>
<rect x="305" y="251" width="1" height="10" fill="#FFFFFF"/>
<rect x="309" y="258" width="1" height="24" fill="#00FF00"/>
<rect x="308" y="261" width="3" height="2" fill="#00FF00"/>
<rect x="313" y="237" width="1" height="29" fill="#00FF00"/>
<rect x="312" y="238" width="3" height="26" fill="#00FF00"/>
<rect x="313" y="239" width="1" height="24" fill="#000000"/>
<rect x="317" y="227" width="1" height="23" fill="#00FF00"/>
<rect x="316" y="239" width="3" height="8" fill="#00FF00"/>
<rect x="317" y="240" width="1" height="6" fill="#FFFFFF"/>
<rect x="321" y="218" width="1" height="31" fill="#00FF00"/>
<rect x="320" y="221" width="3" height="26" fill="#00FF00"/>
<rect x="321" y="222" width="1" height="24" fill="#000000"/>
<rect x="325" y="206" width="1" height="30" fill="#00FF00"/>
<rect x="324" y="219" width="3" height="6" fill="#00FF00"/>
<rect x="325" y="220" width="1" height="4" fill="#000000"/>
<rect x="329" y="219" width="1" height="18" fill="#00FF00"/>
<rect x="328" y="220" width="3" height="10" fill="#00FF00"/>
<rect x="329" y="221" width="1" height="8" fill="#FFFFFF"/>
<rect x="333" y="211" width="1" height="21" fill="#00FF00"/>
<rect x="332" y="224" width="3" height="7" fill="#00FF00"/>
<rect x="333" y="225" width="1" height="5" fill="#FFFFFF"/>
<rect x="337" y="170" width="1" height="53" fill="#00FF00"/>
<rect x="336" y="180" width="3" height="42" fill="#00FF00"/>
<rect x="337" y="181" width="1" height="40" fill="#000000"/>
<rect x="341" y="158" width="1" height="26" fill="#00FF00"/>
<rect x="340" y="171" width="3" height="10" fill="#00FF00"/>
<rect x="341" y="172" width="1" height="8" fill="#000000"/>
<rect x="345" y="153" width="1" height="25" fill="#00FF00"/>
<rect x="344" y="167" width="3" height="5" fill="#00FF00"/>
<rect x="345" y="168" width="1" height="3" fill="#000000"/>
<rect x="349" y="129" width="1" height="44" fill="#00FF00"/>
<rect x="348" y="135" width="3" height="33" fill="#00FF00"/>
<rect x="349" y="136" width="1" height="31" fill="#000000"/>
<rect x="353" y="129" width="1" height="12" fill="#00FF00"/>
<rect x="352" y="132" width="3" height="4" fill="#00FF00"/>
<rect x="353" y="133" width="1" height="2" fill="#FFFFFF"/>
<rect x="357" y="123" width="1" height="16" fill="#00FF00"/>
<rect x="356" y="128" width="3" height="4" fill="#00FF00"/>
<rect x="357" y="129" width="1" height="2" fill="#000000"/>
<rect x="361" y="123" width="1" height="50" fill="#00FF00"/>
<rect x="360" y="129" width="3" height="39" fill="#00FF00"/>
<rect x="361" y="130" width="1" height="37" fill="#FFFFFF"/>
<rect x="365" y="159" width="1" height="20" fill="#00FF00"/>
<rect x="364" y="166" width="3" height="7" fill="#00FF00"/>
<rect x="365" y="167" width="1" height="5" fill="#FFFFFF"/>
<rect x="369" y="147" width="1" height="30" fill="#00FF00"/>
<rect x="368" y="152" width="3" height="21" fill="#00FF00"/>
<rect x="369" y="153" width="1" height="19" fill="#000000"/>
<rect x="373" y="150" width="1" height="40" fill="#00FF00"/>
<rect x="372" y="151" width="3" height="26" fill="#00FF00"/>
<rect x="373" y="152" width="1" height="24" fill="#FFFFFF"/>
<rect x="377" y="169" width="1" height="18" fill="#00FF00"/>
<rect x="376" y="176" width="3" height="3" fill="#00FF00"/>
<rect x="377" y="177" width="1" height="1" fill="#FFFFFF"/>
<rect x="381" y="173" width="1" height="46" fill="#00FF00"/>
<rect x="380" y="178" width="3" height="39" fill="#00FF00"/>
<rect x="381" y="179" width="1" height="37" fill="#FFFFFF"/>
<rect x="385" y="206" width="1" height="16" fill="#00FF00"/>
<rect x="384" y="217" width="3" height="4" fill="#00FF00"/>
<rect x="385" y="218" width="1" height="2" fill="#FFFFFF"/>
<rect x="389" y="198" width="1" height="24" fill="#00FF00"/>
<rect x="388" y="199" width="3" height="20" fill="#00FF00"/>
<rect x="389" y="200" width="1" height="18" fill="#000000"/>
<rect x="393" y="180" width="1" height="25" fill="#00FF00"/>
<rect x="392" y="186" width="3" height="13" fill="#00FF00"/>
<rect x="393" y="187" width="1" height="11" fill="#000000"/>
<rect x="397" y="175" width="1" height="30" fill="#00FF00"/>
<rect x="396" y="185" width="3" height="8" fill="#00FF00"/>
<rect x="397" y="186" width="1" height="6" fill="#000000"/>
<rect x="401" y="176" width="1" height="19" fill="#00FF00"/>
<rect x="400" y="190" width="3" height="4" fill="#00FF00"/>
<rect x="401" y="191" width="1" height="2" fill="#000000"/>
<rect x="405" y="183" width="1" height="12" fill="#00FF00"/>
<rect x="404" y="191" width="3" height="3" fill="#00FF00"/>
<rect x="405" y="192" width="1" height="1" fill="#FFFFFF"/>
<rect x="409" y="191" width="1" height="23" fill="#00FF00"/>
<rect x="408" y="198" width="3" height="11" fill="#00FF00"/>
<rect x="409" y="199" width="1" height="9" fill="#FFFFFF"/>
<rect x="413" y="192" width="1" height="35" fill="#00FF00"/>
<rect x="412" y="198" width="3" height="17" fill="#00FF00"/>
<rect x="413" y="199" width="1" height="15" fill="#000000"/>
<rect x="417" y="171" width="1" height="28" fill="#00FF00"/>
<rect x="416" y="177" width="3" height="19" fill="#00FF00"/>
<rect x="417" y="178" width="1" height="17" fill="#000000"/>
<rect x="421" y="147" width="1" height="42" fill="#00FF00"/>
<rect x="420" y="154" width="3" height="25" fill="#00FF00"/>
<rect x="421" y="155" width="1" height="23" fill="#000000"/>
<rect x="425" y="148" width="1" height="25" fill="#00FF00"/>
<rect x="424" y="153" width="3" height="16" fill="#00FF00"/>
<rect x="425" y="154" width="1" height="14" fill="#FFFFFF"/>
<rect x="429" y="147" width="1" height="23" fill="#00FF00"/>
<rect x="428" y="151" width="3" height="17" fill="#00FF00"/>
<rect x="429" y="152" width="1" height="15" fill="#000000"/>
<rect x="433" y="152" width="1" height="17" fill="#00FF00"/>
<rect x="432" y="152" width="3" height="7" fill="#00FF00"/>
<rect x="433" y="153" width="1" height="5" fill="#FFFFFF"/>
<rect x="437" y="155" width="1" height="29" fill="#00FF00"/>
<rect x="436" y="160" width="3" height="21" fill="#00FF00"/>
<rect x="437" y="161" width="1" height="19" fill="#FFFFFF"/>
<rect x="441" y="171" width="1" height="30" fill="#00FF00"/>
<rect x="440" y="182" width="3" height="15" fill="#00FF00"/>
<rect x="441" y="183" width="1" height="13" fill="#FFFFFF"/>
<rect x="445" y="171" width="1" height="32" fill="#00FF00"/>
<rect x="444" y="185" width="3" height="13" fill="#00FF00"/>
<rect x="445" y="186" width="1" height="11" fill="#000000"/>
<rect x="449" y="183" width="1" height="17" fill="#00FF00"/>
<rect x="448" y="186" width="3" height="1" fill="#00FF00"/>
<rect x="453" y="168" width="1" height="28" fill="#00FF00"/>
<rect x="452" y="180" width="3" height="7" fill="#00FF00"/>
<rect x="453" y="181" width="1" height="5" fill="#000000"/>
<rect x="457" y="175" width="1" height="14" fill="#00FF00"/>
<rect x="456" y="180" width="3" height="7" fill="#00FF00"/>
<rect x="457" y="181" width="1" height="5" fill="#FFFFFF"/>
<rect x="461" y="166" width="1" height="30" fill="#00FF00"/>
<rect x="460" y="177" width="3" height="10" fill="#00FF00"/>
<rect x="461" y="178" width="1" height="8" fill="#000000"/>
<rect x="465" y="168" width="1" height="49" fill="#00FF00"/>
<rect x="464" y="177" width="3" height="36" fill="#00FF00"/>
<rect x="465" y="178" width="1" height="34" fill="#FFFFFF"/>
<rect x="469" y="198" width="1" height="22" fill="#00FF00"/>
<rect x="468" y="207" width="3" height="7" fill="#00FF00"/>
<rect x="469" y="208" width="1" height="5" fill="#000000"/>
<rect x="473" y="202" width="1" height="17" fill="#00FF00"/>
<rect x="472" y="207" width="3" height="2" fill="#00FF00"/>
<rect x="477" y="197" width="1" height="15" fill="#00FF00"/>
<rect x="476" y="208" width="3" height="1" fill="#00FF00"/>
<rect x="481" y="206" width="1" height="17" fill="#00FF00"/>
<rect x="480" y="208" width="3" height="3" fill="#00FF00"/>
<rect x="481" y="209" width="1" height="1" fill="#000000"/>
<rect x="485" y="197" width="1" height="18" fill="#00FF00"/>
<rect x="484" y="211" width="3" height="4" fill="#00FF00"/>
<rect x="485" y="212" width="1" height="2" fill="#FFFFFF"/>
<rect x="489" y="187" width="1" height="33" fill="#00FF00"/>
<rect x="488" y="194" width="3" height="19" fill="#00FF00"/>
<rect x="489" y="195" width="1" height="17" fill="#000000"/>
<rect x="493" y="172" width="1" height="24" fill="#00FF00"/>
<rect x="492" y="174" width="3" height="21" fill="#00FF00"/>
<rect x="493" y="175" width="1" height="19" fill="#000000"/>
<rect x="497" y="171" width="1" height="14" fill="#00FF00"/>
<rect x="496" y="174" width="3" height="2" fill="#00FF00"/>
<rect x="501" y="171" width="1" height="14" fill="#00FF00"/>
<rect x="500" y="180" width="3" height="4" fill="#00FF00"/>
<rect x="501" y="181" width="1" height="2" fill="#FFFFFF"/>
<rect x="505" y="185" width="1" height="26" fill="#00FF00"/>
<rect x="504" y="186" width="3" height="14" fill="#00FF00"/>
<rect x="505" y="187" width="1" height="12" fill="#FFFFFF"/>
<rect x="509" y="196" width="1" height="39" fill="#00FF00"/>
<rect x="508" y="198" width="3" height="33" fill="#00FF00"/>
<rect x="509" y="199" width="1" height="31" fill="#FFFFFF"/>
<rect x="513" y="228" width="1" height="16" fill="#00FF00"/>
<rect x="512" y="230" width="3" height="9" fill="#00FF00"/>
<rect x="513" y="231" width="1" height="7" fill="#FFFFFF"/>
<rect x="517" y="227" width="1" height="24" fill="#00FF00"/>
<rect x="516" y="233" width="3" height="8" fill="#00FF00"/>
<rect x="517" y="234" width="1" height="6" fill="#000000"/>
<rect x="521" y="211" width="1" height="26" fill="#00FF00"/>
<rect x="520" y="216" width="3" height="19" fill="#00FF00"/>
<rect x="521" y="217" width="1" height="17" fill="#000000"/>
<rect x="525" y="212" width="1" height="14" fill="#00FF00"/>
<rect x="524" y="215" width="3" height="2" fill="#00FF00"/>
<rect x="529" y="212" width="1" height="55" fill="#00FF00"/>
<rect x="528" y="213" width="3" height="42" fill="#00FF00"/>
<rect x="529" y="214" width="1" height="40" fill="#FFFFFF"/>
<rect x="533" y="230" width="1" height="32" fill="#00FF00"/>
<rect x="532" y="240" width="3" height="16" fill="#00FF00"/>
<rect x="533" y="241" width="1" height="14" fill="#000000"/>
<rect x="537" y="226" width="1" height="24" fill="#00FF00"/>
<rect x="536" y="240" width="3" height="4" fill="#00FF00"/>
<rect x="537" y="241" width="1" height="2" fill="#FFFFFF"/>
<rect x="541" y="212" width="1" height="35" fill="#00FF00"/>
<rect x="540" y="240" width="3" height="5" fill="#00FF00"/>
<rect x="541" y="241" width="1" height="3" fill="#000000"/>
<rect x="545" y="217" width="1" height="30" fill="#00FF00"/>
<rect x="544" y="218" width="3" height="24" fill="#00FF00"/>
<rect x="545" y="219" width="1" height="22" fill="#000000"/>
<rect x="549" y="202" width="1" height="19" fill="#00FF00"/>
<rect x="548" y="215" width="3" height="4" fill="#00FF00"/>
<rect x="549" y="216" width="1" height="2" fill="#000000"/>
<rect x="553" y="214" width="1" height="13" fill="#00FF00"/>
<rect x="552" y="216" width="3" height="3" fill="#00FF00"/>
<rect x="553" y="217" width="1" height="1" fill="#FFFFFF"/>
<rect x="557" y="199" width="1" height="28" fill="#00FF00"/>
<rect x="556" y="203" width="3" height="15" fill="#00FF00"/>
<rect x="557" y="204" width="1" height="13" fill="#000000"/>
<rect x="561" y="198" width="1" height="11" fill="#00FF00"/>
<rect x="560" y="202" width="3" height="7" fill="#00FF00"/>
<rect x="561" y="203" width="1" height="5" fill="#FFFFFF"/>
<rect x="565" y="197" width="1" height="24" fill="#00FF00"/>
<rect x="564" y="206" width="3" height="3" fill="#00FF00"/>
<rect x="565" y="207" width="1" height="1" fill="#FFFFFF"/>
<rect x="569" y="184" width="1" height="33" fill="#00FF00"/>
<rect x="568" y="192" width="3" height="17" fill="#00FF00"/>
<rect x="569" y="193" width="1" height="15" fill="#000000"/>
<rect x="573" y="177" width="1" height="19" fill="#00FF00"/>
<rect x="572" y="192" width="3" height="3" fill="#00FF00"/>
<rect x="573" y="193" width="1" height="1" fill="#FFFFFF"/>
<rect x="577" y="180" width="1" height="15" fill="#00FF00"/>
<rect x="576" y="181" width="3" height="13" fill="#00FF00"/>
<rect x="577" y="182" width="1" height="11" fill="#000000"/>
<rect x="581" y="164" width="1" height="20" fill="#00FF00"/>
<rect x="580" y="173" width="3" height="10" fill="#00FF00"/>
<rect x="581" y="174" width="1" height="8" fill="#000000"/>
<rect x="585" y="167" width="1" height="23" fill="#00FF00"/>
<rect x="584" y="173" width="3" height="10" fill="#00FF00"/>
<rect x="585" y="174" width="1" height="8" fill="#FFFFFF"/>
<rect x="589" y="167" width="1" height="19" fill="#00FF00"/>
<rect x="588" y="178" width="3" height="4" fill="#00FF00"/>
<rect x="589" y="179" width="1" height="2" fill="#FFFFFF"/>
<rect x="593" y="158" width="1" height="23" fill="#00FF00"/>
<rect x="592" y="167" width="3" height="12" fill="#00FF00"/>
<rect x="593" y="168" width="1" height="10" fill="#000000"/>
<rect x="597" y="162" width="1" height="27" fill="#00FF00"/>
<rect x="596" y="167" width="3" height="12" fill="#00FF00"/>
<rect x="597" y="168" width="1" height="10" fill="#FFFFFF"/>
<rect x="601" y="166" width="1" height="21" fill="#00FF00"/>
<rect x="600" y="177" width="3" height="8" fill="#00FF00"/>
<rect x="601" y="178" width="1" height="6" fill="#000000"/>
<rect x="605" y="159" width="1" height="32" fill="#00FF00"/>
<rect x="604" y="162" width="3" height="21" fill="#00FF00"/>
<rect x="605" y="163" width="1" height="19" fill="#000000"/>
<rect x="609" y="129" width="1" height="37" fill="#00FF00"/>
<rect x="608" y="131" width="3" height="32" fill="#00FF00"/>
<rect x="609" y="132" width="1" height="30" fill="#000000"/>
<rect x="613" y="115" width="1" height="26" fill="#00FF00"/>
<rect x="612" y="116" width="3" height="16" fill="#00FF00"/>
<rect x="613" y="117" width="1" height="14" fill="#000000"/>
<rect x="617" y="108" width="1" height="13" fill="#00FF00"/>
<rect x="616" y="109" width="3" height="7" fill="#00FF00"/>
<rect x="617" y="110" width="1" height="5" fill="#000000"/>
<rect x="621" y="111" width="1" height="24" fill="#00FF00"/>
<rect x="620" y="120" width="3" height="14" fill="#00FF00"/>
<rect x="621" y="121" width="1" height="12" fill="#FFFFFF"/>
<rect x="625" y="123" width="1" height="11" fill="#00FF00"/>
<rect x="624" y="124" width="3" height="9" fill="#00FF00"/>
<rect x="625" y="125" width="1" height="7" fill="#000000"/>
<rect x="629" y="116" width="1" height="17" fill="#00FF00"/>
<rect x="628" y="127" width="3" height="2" fill="#00FF00"/>
<rect x="633" y="129" width="1" height="23" fill="#00FF00"/>
<rect x="632" y="129" width="3" height="18" fill="#00FF00"/>
<rect x="633" y="130" width="1" height="16" fill="#FFFFFF"/>
<rect x="637" y="139" width="1" height="17" fill="#00FF00"/>
<rect x="636" y="144" width="3" height="3" fill="#00FF00"/>
<rect x="637" y="145" width="1" height="1" fill="#FFFFFF"/>
<rect x="641" y="137" width="1" height="18" fill="#00FF00"/>
<rect x="640" y="138" width="3" height="8" fill="#00FF00"/>
<rect x="641" y="139" width="1" height="6" fill="#000000"/>
<rect x="645" y="139" width="1" height="12" fill="#00FF00"/>
<rect x="644" y="141" width="3" height="6" fill="#00FF00"/>
<rect x="645" y="142" width="1" height="4" fill="#FFFFFF"/>
<rect x="649" y="146" width="1" height="63" fill="#00FF00"/>
<rect x="648" y="146" width="3" height="63" fill="#00FF00"/>
<rect x="649" y="147" width="1" height="61" fill="#FFFFFF"/>
<rect x="653" y="202" width="1" height="21" fill="#00FF00"/>
<rect x="652" y="208" width="3" height="5" fill="#00FF00"/>
<rect x="653" y="209" width="1" height="3" fill="#FFFFFF"/>
<rect x="657" y="207" width="1" height="20" fill="#00FF00"/>
<rect x="656" y="210" width="3" height="3" fill="#00FF00"/>
<rect x="657" y="211" width="1" height="1" fill="#000000"/>
<rect x="661" y="194" width="1" height="22" fill="#00FF00"/>
<rect x="660" y="200" width="3" height="11" fill="#00FF00"/>
<rect x="661" y="201" width="1" height="9" fill="#000000"/>
<rect x="665" y="200" width="1" height="9" fill="#00FF00"/>
<rect x="664" y="201" width="3" height="6" fill="#00FF00"/>
<rect x="665" y="202" width="1" height="4" fill="#FFFFFF"/>
<rect x="669" y="199" width="1" height="13" fill="#00FF00"/>
<rect x="668" y="207" width="3" height="4" fill="#00FF00"/>
<rect x="669" y="208" width="1" height="2" fill="#FFFFFF"/>
<rect x="673" y="194" width="1" height="19" fill="#00FF00"/>
<rect x="672" y="197" width="3" height="15" fill="#00FF00"/>
<rect x="673" y="198" width="1" height="13" fill="#000000"/>
<rect x="677" y="191" width="1" height="25" fill="#00FF00"/>
<rect x="676" y="196" width="3" height="10" fill="#00FF00"/>
<rect x="677" y="197" width="1" height="8" fill="#FFFFFF"/>
<rect x="681" y="200" width="1" height="31" fill="#00FF00"/>
<rect x="680" y="207" width="3" height="18" fill="#00FF00"/>
<rect x="681" y="208" width="1" height="16" fill="#FFFFFF"/>
<rect x="685" y="223" width="1" height="18" fill="#00FF00"/>
<rect x="684" y="224" width="3" height="2" fill="#00FF00"/>
<rect x="689" y="203" width="1" height="20" fill="#00FF00"/>
<rect x="688" y="207" width="3" height="15" fill="#00FF00"/>
<rect x="689" y="208" width="1" height="13" fill="#000000"/>
<rect x="693" y="204" width="1" height="23" fill="#00FF00"/>
<rect x="692" y="208" width="3" height="14" fill="#00FF00"/>
<rect x="693" y="209" width="1" height="12" fill="#FFFFFF"/>
<rect x="697" y="222" width="1" height="18" fill="#00FF00"/>
<rect x="696" y="222" width="3" height="5" fill="#00FF00"/>
<rect x="697" y="223" width="1" height="3" fill="#FFFFFF"/>
<rect x="701" y="226" width="1" height="22" fill="#00FF00"/>
<rect x="700" y="227" width="3" height="16" fill="#00FF00"/>
<rect x="701" y="228" width="1" height="14" fill="#FFFFFF"/>
<rect x="705" y="230" width="1" height="20" fill="#00FF00"/>
<rect x="704" y="238" width="3" height="5" fill="#00FF00"/>
<rect x="705" y="239" width="1" height="3" fill="#000000"/>
<rect x="709" y="237" width="1" height="25" fill="#00FF00"/>
<rect x="708" y="239" width="3" height="21" fill="#00FF00"/>
<rect x="709" y="240" width="1" height="19" fill="#FFFFFF"/>
<rect x="713" y="250" width="1" height="12" fill="#00FF00"/>
<rect x="712" y="254" width="3" height="5" fill="#00FF00"/>
<rect x="713" y="255" width="1" height="3" fill="#000000"/>
<rect x="717" y="250" width="1" height="13" fill="#00FF00"/>
<rect x="716" y="254" width="3" height="4" fill="#00FF00"/>
<rect x="717" y="255" width="1" height="2" fill="#000000"/>
<rect x="721" y="244" width="1" height="19" fill="#00FF00"/>
<rect x="720" y="256" width="3" height="6" fill="#00FF00"/>
<rect x="721" y="257" width="1" height="4" fill="#FFFFFF"/>
<rect x="725" y="252" width="1" height="21" fill="#00FF00"/>
<rect x="724" y="257" width="3" height="8" fill="#00FF00"/>
<rect x="725" y="258" width="1" height="6" fill="#FFFFFF"/>
<rect x="729" y="258" width="1" height="32" fill="#00FF00"/>
<rect x="728" y="261" width="3" height="24" fill="#00FF00"/>
<rect x="729" y="262" width="1" height="22" fill="#FFFFFF"/>
<rect x="733" y="277" width="1" height="30" fill="#00FF00"/>
<rect x="732" y="282" width="3" height="25" fill="#00FF00"/>
<rect x="733" y="283" width="1" height="23" fill="#FFFFFF"/>
<rect x="737" y="303" width="1" height="19" fill="#00FF00"/>
<rect x="736" y="307" width="3" height="7" fill="#00FF00"/>
<rect x="737" y="308" width="1" height="5" fill="#FFFFFF"/>
<rect x="741" y="325" width="1" height="38" fill="#00FF00"/>
<rect x="740" y="330" width="3" height="32" fill="#00FF00"/>
<rect x="741" y="331" width="1" height="30" fill="#FFFFFF"/>
<rect x="745" y="339" width="1" height="25" fill="#00FF00"/>
<rect x="744" y="343" width="3" height="16" fill="#00FF00"/>
<rect x="745" y="344" width="1" height="14" fill="#000000"/>
<rect x="749" y="319" width="1" height="28" fill="#00FF00"/>
<rect x="748" y="322" width="3" height="21" fill="#00FF00"/>
<rect x="749" y="323" width="1" height="19" fill="#000000"/>
<rect x="753" y="301" width="1" height="24" fill="#00FF00"/>
<rect x="752" y="309" width="3" height="15" fill="#00FF00"/>
<rect x="753" y="310" width="1" height="13" fill="#000000"/>
<rect x="757" y="287" width="1" height="29" fill="#00FF00"/>
<rect x="756" y="288" width="3" height="15" fill="#00FF00"/>
<rect x="757" y="289" width="1" height="13" fill="#000000"/>
<rect x="761" y="285" width="1" height="18" fill="#00FF00"/>
<rect x="760" y="287" width="3" height="16" fill="#00FF00"/>
<rect x="761" y="288" width="1" height="14" fill="#000000"/>
<rect x="765" y="286" width="1" height="21" fill="#00FF00"/>
<rect x="764" y="303" width="3" height="3" fill="#00FF00"/>
<rect x="765" y="304" width="1" height="1" fill="#FFFFFF"/>
<rect x="769" y="303" width="1" height="20" fill="#00FF00"/>
<rect x="768" y="305" width="3" height="11" fill="#00FF00"/>
<rect x="769" y="306" width="1" height="9" fill="#FFFFFF"/>
<rect x="773" y="301" width="1" height="43" fill="#00FF00"/>
<rect x="772" y="311" width="3" height="31" fill="#00FF00"/>
<rect x="773" y="312" width="1" height="29" fill="#FFFFFF"/>
<rect x="777" y="328" width="1" height="34" fill="#00FF00"/>
<rect x="776" y="342" width="3" height="6" fill="#00FF00"/>
<rect x="777" y="343" width="1" height="4" fill="#FFFFFF"/>
<rect x="781" y="344" width="1" height="33" fill="#00FF00"/>
<rect x="780" y="352" width="3" height="12" fill="#00FF00"/>
<rect x="781" y="353" width="1" height="10" fill="#FFFFFF"/>
<rect x="785" y="345" width="1" height="19" fill="#00FF00"/>
<rect x="784" y="353" width="3" height="10" fill="#00FF00"/>
<rect x="785" y="354" width="1" height="8" fill="#000000"/>
<rect x="789" y="355" width="1" height="24" fill="#00FF00"/>
<rect x="788" y="356" width="3" height="21" fill="#00FF00"/>
<rect x="789" y="357" width="1" height="19" fill="#FFFFFF"/>
<rect x="793" y="373" width="1" height="30" fill="#00FF00"/>
<rect x="792" y="376" width="3" height="25" fill="#00FF00"/>
<rect x="793" y="377" width="1" height="23" fill="#FFFFFF"/>
<rect x="797" y="373" width="1" height="30" fill="#00FF00"/>
<rect x="796" y="394" width="3" height="7" fill="#00FF00"/>
<rect x="797" y="395" width="1" height="5" fill="#000000"/>
<rect x="801" y="385" width="1" height="29" fill="#00FF00"/>
<rect x="800" y="395" width="3" height="19" fill="#00FF00"/>
<rect x="801" y="396" width="1" height="17" fill="#FFFFFF"/>
<rect x="805" y="389" width="1" height="37" fill="#00FF00"/>
<rect x="804" y="396" width="3" height="17" fill="#00FF00"/>
<rect x="805" y="397" width="1" height="15" fill="#000000"/>
<rect x="809" y="378" width="1" height="27" fill="#00FF00"/>
<rect x="808" y="398" width="3" height="5" fill="#00FF00"/>
<rect x="809" y="399" width="1" height="3" fill="#FFFFFF"/>
<rect x="813" y="394" width="1" height="22" fill="#00FF00"/>
<rect x="812" y="394" width="3" height="10" fill="#00FF00"/>
<rect x="813" y="395" width="1" height="8" fill="#000000"/>
<rect x="817" y="356" width="1" height="47" fill="#00FF00"/>
<rect x="816" y="366" width="3" height="31" fill="#00FF00"/>
<rect x="817" y="367" width="1" height="29" fill="#000000"/>
<rect x="821" y="357" width="1" height="15" fill="#00FF00"/>
<rect x="820" y="362" width="3" height="7" fill="#00FF00"/>
<rect x="821" y="363" width="1" height="5" fill="#000000"/>
<polygon points="60.0,54.5 63.0,54.5 63.0,61.5 67.5,58.3 67.5,62.0 61.5,68.3 55.5,62.0 55.5,58.3 60.0,61.5" fill="#FF0000"/>
<polygon points="131.7,141.5 134.7,141.5 134.7,148.5 139.2,145.3 139.2,149.0 133.2,155.3 127.2,149.0 127.2,145.3 131.7,148.5" fill="#FF0000"/>
<polygon points="172.1,134.0 175.1,134.0 175.1,141.0 179.6,137.8 179.6,141.5 173.6,147.8 167.6,141.5 167.6,137.8 172.1,141.0" fill="#FF0000"/>
<polygon points="260.2,206.5 263.2,206.5 263.2,213.5 267.7,210.3 267.7,214.0 261.7,220.3 255.7,214.0 255.7,210.3 260.2,213.5" fill="#FF0000"/>
<polygon points="291.8,194.1 294.8,194.1 294.8,201.1 299.3,197.9 299.3,201.6 293.3,207.9 287.3,201.6 287.3,197.9 291.8,201.1" fill="#FF0000"/>
<polygon points="364.2,135.4 367.2,135.4 367.2,142.4 371.7,139.2 371.7,142.9 365.7,149.2 359.7,142.9 359.7,139.2 364.2,142.4" fill="#FF0000"/>
<polygon points="408.2,170.2 411.2,170.2 411.2,177.2 415.7,174.0 415.7,177.7 409.7,184.0 403.7,177.7 403.7,174.0 408.2,177.2" fill="#FF0000"/>
<polygon points="436.2,136.2 439.2,136.2 439.2,143.2 443.7,140.0 443.7,143.7 437.7,150.0 431.7,143.7 431.7,140.0 436.2,143.2" fill="#FF0000"/>
<polygon points="464.2,148.8 467.2,148.8 467.2,155.8 471.7,152.6 471.7,156.3 465.7,162.6 459.7,156.3 459.7,152.6 464.2,155.8" fill="#FF0000"/>
<polygon points="508.3,178.6 511.3,178.6 511.3,185.6 515.8,182.4 515.8,186.1 509.8,192.4 503.8,186.1 503.8,182.4 508.3,185.6" fill="#FF0000"/>
<polygon points="628.0,96.3 631.0,96.3 631.0,103.3 635.5,100.1 635.5,103.8 629.5,110.1 623.5,103.8 623.5,100.1 628.0,103.3" fill="#FF0000"/>
<polygon points="679.2,181.5 682.2,181.5 682.2,188.5 686.7,185.3 686.7,189.0 680.7,195.3 674.7,189.0 674.7,185.3 679.2,188.5" fill="#FF0000"/>
<polygon points="771.7,279.9 774.7,279.9 774.7,286.9 779.2,283.7 779.2,287.4 773.2,293.7 767.2,287.4 767.2,283.7 771.7,286.9" fill="#FF0000"/>
<polygon points="116.7,190.9 122.2,196.4 122.2,199.4 121.2,199.4 119.7,197.9 118.2,197.9 118.2,204.4 115.2,204.4 115.2,197.9 113.7,197.9 112.2,199.4 111.2,199.4 111.2,196.4" fill="#0000FF"/>
<polygon points="144.4,179.0 149.9,184.5 149.9,187.5 148.9,187.5 147.4,186.0 145.9,186.0 145.9,192.5 142.9,192.5 142.9,186.0 141.4,186.0 139.9,187.5 138.9,187.5 138.9,184.5" fill="#0000FF"/>
<polygon points="212.4,265.2 217.9,270.7 217.9,273.7 216.9,273.7 215.4,272.2 213.9,272.2 213.9,278.7 210.9,278.7 210.9,272.2 209.4,272.2 207.9,273.7 206.9,273.7 206.9,270.7" fill="#0000FF"/>
<polygon points="252.2,252.7 257.7,258.2 257.7,261.2 256.7,261.2 255.2,259.7 253.7,259.7 253.7,266.2 250.7,266.2 250.7,259.7 249.2,259.7 247.7,261.2 246.7,261.2 246.7,258.2" fill="#0000FF"/>
<polygon points="276.5,244.3 282.0,249.8 282.0,252.8 281.0,252.8 279.5,251.3 278.0,251.3 278.0,257.8 275.0,257.8 275.0,251.3 273.5,251.3 272.0,252.8 271.0,252.8 271.0,249.8" fill="#0000FF"/>
<polygon points="320.3,255.5 325.8,261.0 325.8,264.0 324.8,264.0 323.3,262.5 321.8,262.5 321.8,269.0 318.8,269.0 318.8,262.5 317.3,262.5 315.8,264.0 314.8,264.0 314.8,261.0" fill="#0000FF"/>
<polygon points="396.0,212.3 401.5,217.8 401.5,220.8 400.5,220.8 399.0,219.3 397.5,219.3 397.5,225.8 394.5,225.8 394.5,219.3 393.0,219.3 391.5,220.8 390.5,220.8 390.5,217.8" fill="#0000FF"/>
<polygon points="416.7,204.5 422.2,210.0 422.2,213.0 421.2,213.0 419.7,211.5 418.2,211.5 418.2,218.0 415.2,218.0 415.2,211.5 413.7,211.5 412.2,213.0 411.2,213.0 411.2,210.0" fill="#0000FF"/>
<polygon points="456.4,197.3 461.9,202.8 461.9,205.8 460.9,205.8 459.4,204.3 457.9,204.3 457.9,210.8 454.9,210.8 454.9,204.3 453.4,204.3 451.9,205.8 450.9,205.8 450.9,202.8" fill="#0000FF"/>
<polygon points="488.4,224.5 493.9,230.0 493.9,233.0 492.9,233.0 491.4,231.5 489.9,231.5 489.9,238.0 486.9,238.0 486.9,231.5 485.4,231.5 483.9,233.0 482.9,233.0 482.9,230.0" fill="#0000FF"/>
<polygon points="544.5,251.5 550.0,257.0 550.0,260.0 549.0,260.0 547.5,258.5 546.0,258.5 546.0,265.0 543.0,265.0 543.0,258.5 541.5,258.5 540.0,260.0 539.0,260.0 539.0,257.0" fill="#0000FF"/>
<polygon points="604.5,196.5 610.0,202.0 610.0,205.0 609.0,205.0 607.5,203.5 606.0,203.5 606.0,210.0 603.0,210.0 603.0,203.5 601.5,203.5 600.0,205.0 599.0,205.0 599.0,202.0" fill="#0000FF"/>
<polygon points="668.5,216.0 674.0,221.5 674.0,224.5 673.0,224.5 671.5,223.0 670.0,223.0 670.0,229.5 667.0,229.5 667.0,223.0 665.5,223.0 664.0,224.5 663.0,224.5 663.0,221.5" fill="#0000FF"/>
<polygon points="756.5,321.5 762.0,327.0 762.0,330.0 761.0,330.0 759.5,328.5 758.0,328.5 758.0,335.0 755.0,335.0 755.0,328.5 753.5,328.5 752.0,330.0 751.0,330.0 751.0,327.0" fill="#0000FF"/>
<polygon points="812.5,422.2 818.0,427.7 818.0,430.7 817.0,430.7 815.5,429.2 814.0,429.2 814.0,435.7 811.0,435.7 811.0,429.2 809.5,429.2 808.0,430.7 807.0,430.7 807.0,427.7" fill="#0000FF"/>
<polyline points="8.0,41.9 17.5,43.4 28.6,45.8 39.6,47.4 55.5,49.8 71.3,52.9 84.0,57.7 96.6,63.2 108.0,67.5 115.8,70.3 131.6,75.8 147.5,80.6 163.3,84.5 179.1,89.3 188.6,93.2 200.0,99.3 210.8,104.5 226.6,111.6 242.5,117.9 258.3,124.3 274.1,129.0 283.6,132.2 300.0,137.1 315.8,142.7 328.5,147.4 331.6,149.0 347.5,149.8 363.3,149.0 379.1,150.6 387.0,152.9 400.0,153.7 410.8,155.3 426.6,156.1 442.5,157.7 458.3,158.5 474.1,160.9 490.0,163.7 499.5,164.0 510.6,166.1 521.6,168.5 537.5,172.4 550.1,175.1 561.2,175.6 585.0,176.2 600.8,176.2 616.6,174.6 632.5,171.4 648.3,170.6 664.1,173.0 680.0,175.1 692.7,175.7 705.3,181.4 718.0,185.2 730.6,189.0 740.0,192.2 757.7,198.9 775.4,205.5 793.2,216.6 806.5,225.4 817.5,231.0 821.0,231.0" fill="none" stroke="#FFFF00" stroke-width="2" stroke-linejoin="round"/>
<polyline points="8.0,63.5 17.5,65.6 28.6,68.8 55.5,69.2 68.1,71.9 79.2,77.5 91.9,83.8 102.9,90.1 115.8,95.6 131.6,101.9 147.5,107.5 160.1,110.6 169.6,111.4 179.1,114.6 191.8,121.7 204.5,132.2 218.7,140.1 234.6,148.0 250.4,154.3 266.2,161.5 282.0,167.8 298.9,173.7 309.5,177.5 320.6,180.6 331.6,183.8 344.3,183.8 355.4,181.4 363.3,179.8 374.4,178.3 383.9,180.6 395.0,180.6 410.8,182.2 429.8,180.6 450.4,181.0 466.2,182.2 482.0,184.6 490.0,185.1 499.5,184.3 509.0,187.5 521.6,188.3 537.5,193.0 556.5,195.4 575.4,195.7 585.0,194.4 600.8,192.5 616.6,188.0 632.5,182.5 645.1,180.1 656.2,180.9 672.0,183.3 680.0,184.0 692.7,187.0 705.3,191.5 718.0,196.0 730.6,200.4 740.0,206.6 757.7,218.8 775.4,228.8 791.1,239.5 802.2,249.0 813.3,257.7 821.2,262.4" fill="none" stroke="#FF0000" stroke-width="2" stroke-linejoin="round"/>
<polyline points="8.0,89.8 17.5,90.9 25.4,93.3 39.6,92.5 55.5,89.8 66.5,90.9 74.5,93.3 87.1,102.8 96.6,109.1 108.0,116.0 115.8,119.3 126.9,124.9 139.6,130.4 150.6,133.6 169.6,134.4 179.1,139.1 188.6,145.4 195.0,150.4 202.9,158.3 214.0,167.4 230.8,176.9 246.6,184.0 262.5,190.3 278.3,195.1 294.1,199.0 303.6,203.8 309.5,206.0 323.7,209.1 338.0,209.9 347.5,206.0 360.1,199.6 369.6,194.9 376.0,194.1 387.0,196.5 395.0,194.9 410.8,194.9 426.6,190.9 442.5,189.3 458.3,188.5 474.1,191.7 495.0,193.3 505.8,191.4 513.7,194.6 524.8,197.0 537.5,200.9 553.3,204.6 569.1,204.9 578.6,202.5 590.0,200.1 600.8,198.3 616.6,188.0 632.5,180.9 645.1,177.3 657.8,177.8 673.6,180.9 686.3,187.0 699.0,191.5 711.6,197.8 724.3,205.4 740.0,217.7 757.7,232.1 775.4,244.3 793.2,262.0 806.5,277.5 815.3,288.6 821.0,291.9" fill="none" stroke="#9400D3" stroke-width="2" stroke-linejoin="round"/>
<polyline points="8.0,111.0 23.8,111.5 31.7,112.3 47.6,104.4 60.2,98.4 66.5,99.6 77.6,106.0 90.3,115.4 101.0,126.0 109.5,134.0 123.7,140.7 139.6,147.8 150.6,150.5 160.1,150.5 168.0,148.9 174.4,151.0 183.9,155.0 195.0,168.6 204.5,178.9 214.0,187.6 226.1,196.7 238.7,201.4 254.6,207.0 267.2,212.5 286.2,214.1 297.3,218.0 309.9,223.6 315.8,225.7 334.8,224.9 344.3,218.6 355.4,207.5 366.5,199.6 374.4,194.9 382.3,196.5 394.9,195.2 410.8,196.5 418.7,194.9 429.8,188.5 442.5,187.8 458.3,186.6 469.4,188.5 482.0,192.5 490.0,193.0 499.5,190.6 505.8,191.4 513.7,197.0 524.8,200.9 540.6,209.3 566.0,209.6 577.0,205.7 585.0,203.1 600.8,194.4 616.6,181.7 632.5,172.2 645.1,167.5 651.5,169.1 664.1,175.4 676.8,179.3 687.6,187.7 699.0,191.5 711.6,200.4 724.3,210.5 737.0,220.6 743.3,230.8 750.5,243.5 759.7,251.2 769.0,259.3 781.6,274.3 791.1,285.4 800.6,301.2 810.1,313.9 819.6,324.1 821.2,324.6" fill="none" stroke="#0000FF" stroke-width="2" stroke-linejoin="round"/>
<rect x="622" y="105" width="5" height="7" fill="#FFD700"/>
<rect x="624" y="107" width="1" height="3" fill="#000000"/>
<line x1="9" y1="48.5" x2="1035" y2="48.5" stroke="#FFC0CB" stroke-width="1"/>
<line x1="9" y1="91.5" x2="1035" y2="91.5" stroke="#0000FF" stroke-width="1"/>
<line x1="9" y1="133.5" x2="1035" y2="133.5" stroke="#FFA500" stroke-width="1"/>
<line x1="9" y1="176.5" x2="1035" y2="176.5" stroke="#FF0000" stroke-width="1"/>
<line x1="9" y1="218.5" x2="1035" y2="218.5" stroke="#6B8E23" stroke-width="1"/>
<line x1="9" y1="261.5" x2="1035" y2="261.5" stroke="#0000FF" stroke-width="1"/>
<line x1="9" y1="303.5" x2="1035" y2="303.5" stroke="#6B8E23" stroke-width="1"/>
<line x1="9" y1="346.5" x2="1035" y2="346.5" stroke="#FF0000" stroke-width="1"/>
<line x1="9" y1="388.5" x2="1035" y2="388.5" stroke="#FFA500" stroke-width="1"/>
<line x1="9" y1="431.5" x2="1035" y2="431.5" stroke="#0000FF" stroke-width="1"/>
<rect x="125" y="124" width="676" height="2" fill="#FFD700"/>
<rect x="126" y="123" width="200" height="1" fill="#FFD700"/>
<rect x="125" y="126" width="676" height="1" fill="#FFD700" fill-opacity="0.6"/>
<rect x="123" y="127" width="678" height="2" fill="#FFD700"/>
<rect x="801" y="125" width="34" height="3" fill="#FFD700"/>
<rect x="134" y="261" width="676" height="3" fill="#FFD700"/>
<g clip-path="url(#mainclip)">
<text x="720.5" y="59" fill="#FFC0CB" font-size="11.3" font-weight="normal" text-anchor="middle" textLength="34.4" lengthAdjust="spacingAndGlyphs">[+1/8]P</text>
<text x="720.5" y="102" fill="#0000FF" font-size="11.3" font-weight="normal" text-anchor="middle" textLength="116" lengthAdjust="spacingAndGlyphs">СОПРОТИВЛЕНИЕ [8/8]</text>
<text x="720.5" y="144" fill="#FFA500" font-size="11.3" font-weight="normal" text-anchor="middle" textLength="151" lengthAdjust="spacingAndGlyphs">ОСТАНОВКА_РАЗВОРОТ [7/8]</text>
<text x="720.5" y="187" fill="#FF0000" font-size="11.3" font-weight="normal" text-anchor="middle" textLength="144.6" lengthAdjust="spacingAndGlyphs">ВРАЩЕНИЕ_РАЗВОРОТ [6/8]</text>
<text x="720.5" y="229" fill="#6B8E23" font-size="11.3" font-weight="normal" text-anchor="middle" textLength="100.6" lengthAdjust="spacingAndGlyphs">ВЕРХ_КАНАЛА [5/8]</text>
<text x="720.5" y="272" fill="#0000FF" font-size="11.3" font-weight="normal" text-anchor="middle" textLength="192" lengthAdjust="spacingAndGlyphs">СОПРОТИВЛЕНИЕ_ПОДДЕРЖКА [4/8]</text>
<text x="720.5" y="314" fill="#6B8E23" font-size="11.3" font-weight="normal" text-anchor="middle" textLength="98.7" lengthAdjust="spacingAndGlyphs">ДНО_КАНАЛА [3/8]</text>
<text x="720.5" y="357" fill="#FF0000" font-size="11.3" font-weight="normal" text-anchor="middle" textLength="144.6" lengthAdjust="spacingAndGlyphs">ВРАЩЕНИЕ_РАЗВОРОТ [2/8]</text>
<text x="720.5" y="399" fill="#FFA500" font-size="11.3" font-weight="normal" text-anchor="middle" textLength="151.9" lengthAdjust="spacingAndGlyphs">ОСТАНОВКА_РАЗВОРОТ [1/8]</text>
<text x="720.5" y="442" fill="#0000FF" font-size="11.3" font-weight="normal" text-anchor="middle" textLength="94" lengthAdjust="spacingAndGlyphs">ПОДДЕРЖКА [0/8]</text>
</g>
<g clip-path="url(#rsiclip)">
<polyline points="9.9,486.0 13.0,471.7 19.4,469.0 24.6,474.3 28.5,476.4 32.4,463.1 41.5,462.1 49.3,466.5 53.2,464.0 62.2,479.5 70.0,489.9 75.2,492.4 83.0,499.0 85.6,499.4 89.4,493.0 98.5,494.3 106.3,498.2 110.2,496.3 112.8,482.0 121.9,474.3 127.0,475.6 137.4,492.4 141.3,470.4 145.2,475.6 153.0,479.5 156.9,468.6 165.9,470.4 172.4,484.7 181.5,487.3 186.7,493.7 194.4,500.2 199.6,500.2 210.0,493.7 217.8,480.8 223.0,485.2 228.2,474.3 233.3,479.5 241.1,474.3 248.9,480.8 255.4,474.3 260.6,489.9 265.7,482.0 270.9,482.0 277.3,469.6 281.7,472.5 288.1,473.8 293.3,484.1 297.2,480.8 305.0,492.4 308.9,493.0 312.8,478.2 316.7,480.8 323.1,470.4 325.7,469.6 329.6,475.6 333.5,473.0 337.4,459.3 345.2,457.4 350.4,453.0 356.9,451.5 359.4,463.9 362.0,474.3 365.9,475.6 369.8,469.6 373.7,478.7 377.6,478.7 382.8,489.9 385.4,489.9 393.2,477.4 402.2,479.0 410.0,486.0 421.7,463.9 425.6,471.2 429.4,466.5 441.1,484.1 446.3,480.8 451.5,480.8 454.1,477.4 458.0,479.5 461.9,475.6 465.7,487.3 470.9,486.0 477.4,486.0 485.2,487.8 491.7,467.8 496.9,465.2 511.1,493.7 513.7,494.5 521.5,480.8 525.4,480.8 529.3,492.4 533.2,486.0 541.0,486.0 546.1,474.8 551.1,474.7 556.7,470.0 565.0,470.8 570.6,465.2 574.7,464.9 580.3,458.8 585.8,465.8 590.0,465.2 593.3,460.8 597.0,468.6 601.1,472.7 609.4,456.0 615.0,453.3 617.8,454.7 620.6,467.2 626.1,465.8 633.0,475.5 641.4,474.1 645.6,478.3 649.7,495.8 656.7,495.8 660.8,489.4 667.8,491.3 673.3,484.7 677.5,486.6 683.0,493.0 688.6,482.4 694.2,488.6 698.3,489.4 701.1,493.0 705.3,493.6 709.4,496.9 715.0,494.9 724.7,496.9 731.7,504.7 738.6,506.9 741.4,508.8 748.3,490.8 756.7,476.3 762.2,481.0 769.2,483.8 774.7,493.0 781.7,495.8 785.8,493.0 792.8,499.7 798.3,497.7 801.1,499.7 806.7,491.3 810.8,490.8 817.8,475.5 821.9,474.1" fill="none" stroke="#9400D3" stroke-width="2" stroke-linejoin="round"/>
</g>
<g clip-path="url(#macdclip)">
<rect x="9" y="533" width="1" height="17" fill="#32CD32"/>
<rect x="13" y="533" width="1" height="15" fill="#32CD32"/>
<rect x="17" y="533" width="1" height="12" fill="#32CD32"/>
<rect x="21" y="533" width="1" height="10" fill="#32CD32"/>
<rect x="25" y="533" width="1" height="8" fill="#32CD32"/>
<rect x="29" y="533" width="1" height="8" fill="#32CD32"/>
<rect x="33" y="533" width="1" height="5" fill="#32CD32"/>
<rect x="37" y="533" width="1" height="3" fill="#32CD32"/>
<rect x="41" y="533" width="1" height="2" fill="#32CD32"/>
<rect x="45" y="531" width="1" height="3" fill="#32CD32"/>
<rect x="49" y="530" width="1" height="4" fill="#32CD32"/>
<rect x="53" y="530" width="1" height="4" fill="#32CD32"/>
<rect x="57" y="530" width="1" height="4" fill="#32CD32"/>
<rect x="61" y="531" width="1" height="3" fill="#32CD32"/>
<rect x="65" y="532" width="1" height="2" fill="#32CD32"/>
<rect x="69" y="533" width="1" height="1" fill="#32CD32"/>
<rect x="73" y="533" width="1" height="1" fill="#32CD32"/>
<rect x="77" y="533" width="1" height="2" fill="#32CD32"/>
<rect x="81" y="533" width="1" height="7" fill="#32CD32"/>
<rect x="85" y="533" width="1" height="8" fill="#32CD32"/>
<rect x="89" y="533" width="1" height="10" fill="#32CD32"/>
<rect x="93" y="533" width="1" height="12" fill="#32CD32"/>
<rect x="97" y="533" width="1" height="13" fill="#32CD32"/>
<rect x="101" y="533" width="1" height="14" fill="#32CD32"/>
<rect x="105" y="533" width="1" height="15" fill="#32CD32"/>
<rect x="109" y="533" width="1" height="15" fill="#32CD32"/>
<rect x="113" y="533" width="1" height="15" fill="#32CD32"/>
<rect x="117" y="533" width="1" height="12" fill="#32CD32"/>
<rect x="121" y="533" width="1" height="12" fill="#32CD32"/>
<rect x="125" y="533" width="1" height="11" fill="#32CD32"/>
<rect x="129" y="533" width="1" height="10" fill="#32CD32"/>
<rect x="133" y="533" width="1" height="10" fill="#32CD32"/>
<rect x="137" y="533" width="1" height="11" fill="#32CD32"/>
<rect x="141" y="533" width="1" height="8" fill="#32CD32"/>
<rect x="145" y="533" width="1" height="7" fill="#32CD32"/>
<rect x="149" y="533" width="1" height="7" fill="#32CD32"/>
<rect x="153" y="533" width="1" height="7" fill="#32CD32"/>
<rect x="157" y="533" width="1" height="6" fill="#32CD32"/>
<rect x="161" y="533" width="1" height="3" fill="#32CD32"/>
<rect x="165" y="533" width="1" height="3" fill="#32CD32"/>
<rect x="169" y="533" width="1" height="3" fill="#32CD32"/>
<rect x="173" y="533" width="1" height="4" fill="#32CD32"/>
<rect x="177" y="533" width="1" height="3" fill="#32CD32"/>
<rect x="181" y="533" width="1" height="4" fill="#32CD32"/>
<rect x="185" y="533" width="1" height="6" fill="#32CD32"/>
<rect x="189" y="533" width="1" height="9" fill="#32CD32"/>
<rect x="193" y="533" width="1" height="12" fill="#32CD32"/>
<rect x="197" y="533" width="1" height="15" fill="#32CD32"/>
<rect x="201" y="533" width="1" height="18" fill="#32CD32"/>
<rect x="205" y="533" width="1" height="18" fill="#32CD32"/>
<rect x="209" y="533" width="1" height="18" fill="#32CD32"/>
<rect x="213" y="533" width="1" height="18" fill="#32CD32"/>
<rect x="217" y="533" width="1" height="14" fill="#32CD32"/>
<rect x="221" y="533" width="1" height="15" fill="#32CD32"/>
<rect x="225" y="533" width="1" height="16" fill="#32CD32"/>
<rect x="229" y="533" width="1" height="14" fill="#32CD32"/>
<rect x="233" y="533" width="1" height="14" fill="#32CD32"/>
<rect x="237" y="533" width="1" height="13" fill="#32CD32"/>
<rect x="241" y="533" width="1" height="11" fill="#32CD32"/>
<rect x="245" y="533" width="1" height="10" fill="#32CD32"/>
<rect x="249" y="533" width="1" height="10" fill="#32CD32"/>
<rect x="253" y="533" width="1" height="9" fill="#32CD32"/>
<rect x="257" y="533" width="1" height="8" fill="#32CD32"/>
<rect x="261" y="533" width="1" height="9" fill="#32CD32"/>
<rect x="265" y="533" width="1" height="10" fill="#32CD32"/>
<rect x="269" y="533" width="1" height="8" fill="#32CD32"/>
<rect x="273" y="533" width="1" height="8" fill="#32CD32"/>
<rect x="277" y="533" width="1" height="7" fill="#32CD32"/>
<rect x="281" y="533" width="1" height="6" fill="#32CD32"/>
<rect x="285" y="533" width="1" height="5" fill="#32CD32"/>
<rect x="289" y="533" width="1" height="3" fill="#32CD32"/>
<rect x="293" y="533" width="1" height="5" fill="#32CD32"/>
<rect x="297" y="533" width="1" height="5" fill="#32CD32"/>
<rect x="301" y="533" width="1" height="5" fill="#32CD32"/>
<rect x="305" y="533" width="1" height="5" fill="#32CD32"/>
<rect x="309" y="533" width="1" height="8" fill="#32CD32"/>
<rect x="313" y="533" width="1" height="5" fill="#32CD32"/>
<rect x="317" y="533" width="1" height="5" fill="#32CD32"/>
<rect x="321" y="533" width="1" height="5" fill="#32CD32"/>
<rect x="325" y="533" width="1" height="5" fill="#32CD32"/>
<rect x="329" y="533" width="1" height="5" fill="#32CD32"/>
<rect x="333" y="533" width="1" height="2" fill="#32CD32"/>
<rect x="337" y="533" width="1" height="2" fill="#32CD32"/>
<rect x="341" y="532" width="1" height="2" fill="#32CD32"/>
<rect x="345" y="529" width="1" height="5" fill="#32CD32"/>
<rect x="349" y="525" width="1" height="9" fill="#32CD32"/>
<rect x="353" y="523" width="1" height="11" fill="#32CD32"/>
<rect x="357" y="520" width="1" height="14" fill="#32CD32"/>
<rect x="361" y="521" width="1" height="13" fill="#32CD32"/>
<rect x="365" y="522" width="1" height="12" fill="#32CD32"/>
<rect x="369" y="521" width="1" height="13" fill="#32CD32"/>
<rect x="373" y="523" width="1" height="11" fill="#32CD32"/>
<rect x="377" y="525" width="1" height="9" fill="#32CD32"/>
<rect x="381" y="527" width="1" height="7" fill="#32CD32"/>
<rect x="385" y="529" width="1" height="5" fill="#32CD32"/>
<rect x="389" y="531" width="1" height="3" fill="#32CD32"/>
<rect x="393" y="529" width="1" height="5" fill="#32CD32"/>
<rect x="397" y="531" width="1" height="3" fill="#32CD32"/>
<rect x="401" y="532" width="1" height="2" fill="#32CD32"/>
<rect x="405" y="533" width="1" height="1" fill="#32CD32"/>
<rect x="409" y="533" width="1" height="1" fill="#32CD32"/>
<rect x="413" y="533" width="1" height="1" fill="#32CD32"/>
<rect x="417" y="533" width="1" height="1" fill="#32CD32"/>
<rect x="421" y="531" width="1" height="3" fill="#32CD32"/>
<rect x="425" y="532" width="1" height="2" fill="#32CD32"/>
<rect x="429" y="529" width="1" height="5" fill="#32CD32"/>
<rect x="433" y="528" width="1" height="6" fill="#32CD32"/>
<rect x="437" y="530" width="1" height="4" fill="#32CD32"/>
<rect x="441" y="530" width="1" height="4" fill="#32CD32"/>
<rect x="445" y="531" width="1" height="3" fill="#32CD32"/>
<rect x="449" y="532" width="1" height="2" fill="#32CD32"/>
<rect x="453" y="531" width="1" height="3" fill="#32CD32"/>
<rect x="457" y="530" width="1" height="4" fill="#32CD32"/>
<rect x="461" y="532" width="1" height="2" fill="#32CD32"/>
<rect x="465" y="533" width="1" height="2" fill="#32CD32"/>
<rect x="469" y="533" width="1" height="2" fill="#32CD32"/>
<rect x="473" y="533" width="1" height="3" fill="#32CD32"/>
<rect x="477" y="533" width="1" height="4" fill="#32CD32"/>
<rect x="481" y="533" width="1" height="4" fill="#32CD32"/>
<rect x="485" y="533" width="1" height="5" fill="#32CD32"/>
<rect x="489" y="533" width="1" height="3" fill="#32CD32"/>
<rect x="493" y="533" width="1" height="2" fill="#32CD32"/>
<rect x="497" y="533" width="1" height="2" fill="#32CD32"/>
<rect x="501" y="533" width="1" height="2" fill="#32CD32"/>
<rect x="505" y="533" width="1" height="2" fill="#32CD32"/>
<rect x="509" y="533" width="1" height="3" fill="#32CD32"/>
<rect x="513" y="533" width="1" height="3" fill="#32CD32"/>
<rect x="517" y="533" width="1" height="7" fill="#32CD32"/>
<rect x="521" y="533" width="1" height="7" fill="#32CD32"/>
<rect x="525" y="533" width="1" height="5" fill="#32CD32"/>
<rect x="529" y="533" width="1" height="8" fill="#32CD32"/>
<rect x="533" y="533" width="1" height="8" fill="#32CD32"/>
<rect x="537" y="533" width="1" height="10" fill="#32CD32"/>
<rect x="541" y="533" width="1" height="10" fill="#32CD32"/>
<rect x="545" y="533" width="1" height="7" fill="#32CD32"/>
<rect x="549" y="533" width="1" height="7" fill="#32CD32"/>
<rect x="553" y="533" width="1" height="6" fill="#32CD32"/>
<rect x="557" y="533" width="1" height="6" fill="#32CD32"/>
<rect x="561" y="533" width="1" height="5" fill="#32CD32"/>
<rect x="565" y="533" width="1" height="2" fill="#32CD32"/>
<rect x="569" y="533" width="1" height="2" fill="#32CD32"/>
<rect x="573" y="533" width="1" height="2" fill="#32CD32"/>
<rect x="577" y="533" width="1" height="1" fill="#32CD32"/>
<rect x="581" y="531" width="1" height="3" fill="#32CD32"/>
<rect x="585" y="532" width="1" height="2" fill="#32CD32"/>
<rect x="589" y="529" width="1" height="5" fill="#32CD32"/>
<rect x="593" y="530" width="1" height="4" fill="#32CD32"/>
<rect x="597" y="531" width="1" height="3" fill="#32CD32"/>
<rect x="601" y="530" width="1" height="4" fill="#32CD32"/>
<rect x="605" y="526" width="1" height="8" fill="#32CD32"/>
<rect x="609" y="523" width="1" height="11" fill="#32CD32"/>
<rect x="613" y="521" width="1" height="13" fill="#32CD32"/>
<rect x="617" y="521" width="1" height="13" fill="#32CD32"/>
<rect x="621" y="520" width="1" height="14" fill="#32CD32"/>
<rect x="625" y="520" width="1" height="14" fill="#32CD32"/>
<rect x="629" y="522" width="1" height="12" fill="#32CD32"/>
<rect x="633" y="523" width="1" height="11" fill="#32CD32"/>
<rect x="637" y="523" width="1" height="11" fill="#32CD32"/>
<rect x="641" y="524" width="1" height="10" fill="#32CD32"/>
<rect x="645" y="527" width="1" height="7" fill="#32CD32"/>
<rect x="649" y="531" width="1" height="3" fill="#32CD32"/>
<rect x="653" y="533" width="1" height="2" fill="#32CD32"/>
<rect x="657" y="533" width="1" height="2" fill="#32CD32"/>
<rect x="661" y="533" width="1" height="3" fill="#32CD32"/>
<rect x="665" y="533" width="1" height="4" fill="#32CD32"/>
<rect x="669" y="533" width="1" height="4" fill="#32CD32"/>
<rect x="673" y="533" width="1" height="6" fill="#32CD32"/>
<rect x="677" y="533" width="1" height="6" fill="#32CD32"/>
<rect x="681" y="533" width="1" height="8" fill="#32CD32"/>
<rect x="685" y="533" width="1" height="6" fill="#32CD32"/>
<rect x="689" y="533" width="1" height="7" fill="#32CD32"/>
<rect x="693" y="533" width="1" height="9" fill="#32CD32"/>
<rect x="697" y="533" width="1" height="8" fill="#32CD32"/>
<rect x="701" y="533" width="1" height="11" fill="#32CD32"/>
<rect x="705" y="533" width="1" height="9" fill="#32CD32"/>
<rect x="709" y="533" width="1" height="13" fill="#32CD32"/>
<rect x="713" y="533" width="1" height="13" fill="#32CD32"/>
<rect x="717" y="533" width="1" height="14" fill="#32CD32"/>
<rect x="721" y="533" width="1" height="14" fill="#32CD32"/>
<rect x="725" y="533" width="1" height="16" fill="#32CD32"/>
<rect x="729" y="533" width="1" height="17" fill="#32CD32"/>
<rect x="733" y="533" width="1" height="18" fill="#32CD32"/>
<rect x="737" y="533" width="1" height="20" fill="#32CD32"/>
<rect x="741" y="533" width="1" height="23" fill="#32CD32"/>
<rect x="745" y="533" width="1" height="24" fill="#32CD32"/>
<rect x="749" y="533" width="1" height="24" fill="#32CD32"/>
<rect x="753" y="533" width="1" height="22" fill="#32CD32"/>
<rect x="757" y="533" width="1" height="20" fill="#32CD32"/>
<rect x="761" y="533" width="1" height="19" fill="#32CD32"/>
<rect x="765" y="533" width="1" height="19" fill="#32CD32"/>
<rect x="769" y="533" width="1" height="18" fill="#32CD32"/>
<rect x="773" y="533" width="1" height="18" fill="#32CD32"/>
<rect x="777" y="533" width="1" height="20" fill="#32CD32"/>
<rect x="781" y="533" width="1" height="20" fill="#32CD32"/>
<rect x="785" y="533" width="1" height="22" fill="#32CD32"/>
<rect x="789" y="533" width="1" height="23" fill="#32CD32"/>
<rect x="793" y="533" width="1" height="23" fill="#32CD32"/>
<rect x="797" y="533" width="1" height="25" fill="#32CD32"/>
<rect x="801" y="533" width="1" height="26" fill="#32CD32"/>
<rect x="805" y="533" width="1" height="26" fill="#32CD32"/>
<rect x="809" y="533" width="1" height="23" fill="#32CD32"/>
<rect x="813" y="533" width="1" height="24" fill="#32CD32"/>
<rect x="817" y="533" width="1" height="22" fill="#32CD32"/>
<rect x="821" y="533" width="1" height="20" fill="#32CD32"/>
<polyline points="8.0,550.2 21.0,550.0 26.5,547.4 40.4,541.9 58.0,533.0 68.2,530.3 80.2,530.7 89.5,534.0 100.6,540.4 108.9,543.5 113.5,544.9 141.3,544.9 155.2,541.7 164.4,539.8 173.7,538.0 178.3,536.6 187.6,536.6 196.5,538.9 202.0,541.7 208.5,544.0 217.8,547.7 222.4,548.9 236.3,548.9 245.6,546.3 254.8,544.4 264.0,542.6 273.3,541.2 282.6,539.8 290.0,539.3 297.4,537.7 336.3,537.7 338.1,536.8 345.6,534.0 354.8,529.8 362.2,527.0 369.6,524.3 378.9,522.0 385.4,522.4 390.0,523.8 393.7,524.3 399.3,525.6 404.8,528.4 408.5,529.4 417.8,530.7 429.8,529.8 449.3,529.8 451.1,528.7 456.7,528.7 458.5,529.8 465.0,530.3 469.6,531.7 478.0,532.6 481.7,534.0 490.0,534.6 513.1,534.9 514.0,535.8 525.2,537.2 533.5,537.7 540.9,539.5 564.0,539.5 573.3,538.6 578.0,535.8 585.4,534.0 590.0,533.0 599.3,531.2 608.5,528.4 617.8,526.1 627.0,523.8 634.4,521.9 642.8,520.7 649.3,521.0 654.8,522.9 662.2,526.6 665.9,527.5 673.3,531.7 680.7,535.4 690.0,537.4 699.3,540.0 710.4,541.9 721.5,543.7 734.4,546.9 741.9,549.3 753.0,553.0 764.0,553.5 778.9,553.0 795.6,553.0 804.8,555.4 812.2,556.1 821.5,557.2" fill="none" stroke="#FF0000" stroke-width="2" stroke-linejoin="round"/>
</g>
<g clip-path="url(#stoclip)">
<polyline points="9.5,592.2 13.5,589.1 17.5,586.0 21.5,580.3 25.5,575.9 29.5,573.4 33.5,572.1 37.5,571.4 41.5,570.6 45.5,570.1 49.5,569.8 53.5,569.8 57.5,570.3 61.5,572.1 65.5,576.6 69.5,583.7 73.5,593.0 77.5,601.1 81.5,606.2 85.5,607.9 89.5,607.5 93.5,606.7 97.5,605.7 101.5,605.0 105.5,604.7 109.5,604.0 113.5,601.4 117.5,597.0 121.5,591.0 125.5,585.6 129.5,581.7 133.5,579.9 137.5,580.4 141.5,581.3 145.5,582.1 149.5,582.1 153.5,582.8 157.5,582.6 161.5,581.0 165.5,577.9 169.5,576.8 173.5,579.1 177.5,585.0 181.5,592.3 185.5,597.8 189.5,601.4 193.5,603.2 197.5,605.3 201.5,606.9 205.5,607.4 209.5,606.6 213.5,605.4 217.5,604.0 221.5,602.1 225.5,600.1 229.5,597.4 233.5,594.9 237.5,591.5 241.5,587.7 245.5,582.7 249.5,578.3 253.5,576.5 257.5,578.0 261.5,581.7 265.5,585.9 269.5,590.3 273.5,591.7 277.5,589.7 281.5,584.5 285.5,580.4 289.5,579.2 293.5,581.3 297.5,585.4 301.5,590.3 305.5,595.4 309.5,599.6 313.5,600.9 317.5,598.7 321.5,593.8 325.5,588.9 329.5,585.2 333.5,582.6 337.5,579.7 341.5,576.2 345.5,572.8 349.5,570.6 353.5,569.3 357.5,568.1 361.5,568.4 365.5,570.6 369.5,574.2 373.5,577.5 377.5,580.4 381.5,584.6 385.5,590.3 389.5,596.8 393.5,600.4 397.5,600.1 401.5,597.9 405.5,596.6 409.5,597.4 413.5,598.4 417.5,598.0 421.5,593.8 425.5,586.3 429.5,578.2 433.5,573.2 437.5,572.5 441.5,576.2 445.5,581.7 449.5,586.4 453.5,587.5 457.5,586.7 461.5,585.6 465.5,587.0 469.5,591.1 473.5,596.8 477.5,600.9 481.5,602.6 485.5,602.4 489.5,600.1 493.5,594.5 497.5,586.1 501.5,578.9 505.5,576.7 509.5,581.0 513.5,590.2 517.5,598.5 521.5,602.1 525.5,599.9 529.5,596.9 533.5,596.0 537.5,597.5 541.5,598.5 545.5,597.5 549.5,594.6 553.5,590.8 557.5,586.9 561.5,582.3 565.5,577.2 569.5,573.0 573.5,571.0 577.5,570.2 581.5,569.8 585.5,569.5 589.5,570.2 593.5,571.2 597.5,572.0 601.5,572.8 605.5,573.3 609.5,572.7 613.5,570.1 617.5,567.5 621.5,566.5 625.5,568.4 629.5,571.6 633.5,575.2 637.5,578.5 641.5,581.0 645.5,582.5 649.5,585.8 653.5,591.9 657.5,599.5 661.5,603.6 665.5,604.1 669.5,602.9 673.5,602.2 677.5,601.8 681.5,601.9 685.5,602.4 689.5,602.4 693.5,601.5 697.5,600.5 701.5,600.6 705.5,601.6 709.5,603.2 713.5,603.6 717.5,603.6 721.5,603.0 725.5,603.5 729.5,604.5 733.5,605.7 737.5,606.4 741.5,606.7 745.5,606.4 749.5,605.3 753.5,602.2 757.5,597.7 761.5,592.5 765.5,588.8 769.5,587.4 773.5,589.0 777.5,592.8 781.5,597.6 785.5,601.1 789.5,603.3 793.5,604.8 797.5,606.5 801.5,607.5 805.5,607.1 809.5,605.8 813.5,603.4 817.5,600.5 821.5,596.7" fill="none" stroke="#FF0000" stroke-width="1" stroke-linejoin="round" stroke-dasharray="3 3"/>
<polyline points="9.3,592.5 19.7,576.3 24.9,573.0 41.7,569.8 56.0,569.8 62.5,576.3 70.3,594.4 74.1,604.8 78.0,608.0 85.8,608.0 92.3,605.5 106.6,604.2 109.2,603.5 122.1,584.0 127.3,579.5 132.5,578.6 137.7,582.8 142.9,581.5 148.0,582.1 153.2,584.0 158.4,580.8 164.9,574.3 168.8,576.9 173.9,585.3 181.7,600.3 186.9,601.6 197.3,607.4 202.5,608.0 210.3,604.8 215.4,604.2 221.9,599.0 225.8,598.3 231.0,593.1 234.9,591.2 241.4,583.4 246.6,575.0 250.5,575.0 255.7,579.5 262.1,586.6 269.9,595.1 276.4,586.0 282.9,576.9 288.0,578.9 298.4,591.2 306.2,601.6 309.4,602.9 313.9,599.0 321.7,587.9 326.9,583.4 332.1,582.1 339.9,573.0 345.1,570.4 352.9,568.5 356.7,566.5 358.7,567.2 365.8,575.0 376.2,582.1 378.8,584.7 384.0,595.1 389.2,602.9 393.1,601.6 398.2,595.7 403.4,596.4 409.9,599.0 415.1,599.0 419.0,594.4 422.9,581.5 428.0,572.0 433.2,571.1 437.1,573.7 441.0,582.1 446.2,588.6 450.0,588.6 453.9,586.0 460.4,584.7 463.0,586.0 472.1,602.2 477.3,602.9 485.1,602.2 490.3,595.1 495.4,580.2 498.0,575.6 501.3,574.3 504.5,576.9 508.4,586.0 513.6,602.2 517.5,604.2 520.1,602.2 525.3,595.1 529.2,595.1 537.0,599.6 540.8,599.0 549.9,590.5 557.7,582.8 562.9,575.0 566.8,569.8 573.2,571.1 579.7,568.5 584.9,569.8 590.0,571.7 597.8,572.4 600.4,573.9 606.9,573.7 613.4,565.9 618.6,565.9 622.5,568.5 630.3,576.3 639.3,582.8 645.2,582.8 648.4,587.9 652.3,599.6 657.5,606.1 662.7,602.9 671.8,602.2 675.7,600.9 682.1,602.9 687.3,602.9 692.5,599.9 697.7,599.9 700.3,601.6 705.2,602.9 709.1,604.8 714.3,602.9 722.0,602.9 727.2,605.5 733.7,606.7 744.1,606.7 749.3,603.5 755.8,594.4 762.3,586.6 767.4,586.6 771.3,589.2 780.4,602.2 785.6,602.9 796.0,608.0 801.2,608.0 806.4,604.8 810.2,604.2 820.6,593.1" fill="none" stroke="#008C00" stroke-width="2" stroke-linejoin="round"/>
</g>
<rect x="8.5" y="25.5" width="1027" height="413" fill="none" stroke="#FFFFFF" stroke-width="1"/>
<rect x="8.5" y="440.5" width="1027" height="74" fill="none" stroke="#FFFFFF" stroke-width="1"/>
<rect x="8.5" y="516.5" width="1027" height="45" fill="none" stroke="#FFFFFF" stroke-width="1"/>
<rect x="8.5" y="563.5" width="1027" height="47" fill="none" stroke="#FFFFFF" stroke-width="1"/>
<rect x="12" y="28" width="186" height="11" fill="#000000"/>
<text x="13.9" y="37" fill="#FFFFFF" font-size="10.2" font-weight="normal" text-anchor="start" textLength="55" lengthAdjust="spacingAndGlyphs" stroke="#FFFFFF" stroke-width="0.3">AUDUSD,H4</text>
<text x="75.5" y="37" fill="#FFFFFF" font-size="10.2" font-weight="normal" text-anchor="start" textLength="27" lengthAdjust="spacingAndGlyphs" stroke="#FFFFFF" stroke-width="0.3">1.0101</text>
<text x="106.3" y="37" fill="#FFFFFF" font-size="10.2" font-weight="normal" text-anchor="start" textLength="27.8" lengthAdjust="spacingAndGlyphs" stroke="#FFFFFF" stroke-width="0.3">1.0115</text>
<text x="137.1" y="37" fill="#FFFFFF" font-size="10.2" font-weight="normal" text-anchor="start" textLength="27.8" lengthAdjust="spacingAndGlyphs" stroke="#FFFFFF" stroke-width="0.3">1.0095</text>
<text x="168" y="37" fill="#FFFFFF" font-size="10.2" font-weight="normal" text-anchor="start" textLength="28.3" lengthAdjust="spacingAndGlyphs" stroke="#FFFFFF" stroke-width="0.3">1.0110</text>
<text x="13" y="453.8" fill="#FFFFFF" font-size="10.2" font-weight="normal" text-anchor="start" textLength="63" lengthAdjust="spacingAndGlyphs" stroke="#FFFFFF" stroke-width="0.3">RSI(7) 55.4350</text>
<text x="13" y="529.8" fill="#FFFFFF" font-size="10.2" font-weight="normal" text-anchor="start" textLength="144" lengthAdjust="spacingAndGlyphs" stroke="#FFFFFF" stroke-width="0.3">MACD(12,26,9) -0.00452 -0.00531</text>
<text x="13.5" y="576.7" fill="#FFFFFF" font-size="10.2" font-weight="normal" text-anchor="start" textLength="126.5" lengthAdjust="spacingAndGlyphs" stroke="#FFFFFF" stroke-width="0.3">Stoch(13,3,3) 38.9800 28.3005</text>
<rect x="0" y="0" width="1080" height="21" fill="#D8DCE3"/>
<rect x="0" y="19" width="1080" height="1" fill="#E2E5EA"/>
<rect x="0" y="0" width="1080" height="1" fill="#F4F4F4"/>
<rect x="0" y="20" width="1080" height="1" fill="#7C90B8"/>
<rect x="0" y="21" width="1080" height="1" fill="#A8ACB0"/>
<rect x="0" y="22" width="1080" height="1" fill="#383838"/>
<rect x="0" y="0" width="1" height="632" fill="#303030"/>
<rect x="1" y="21" width="2" height="611" fill="#F6F6F6"/>
<rect x="3" y="21" width="2" height="611" fill="#C2C7CE"/>
<rect x="5" y="21" width="1" height="611" fill="#5A5A5A"/>
<rect x="1075" y="21" width="2" height="611" fill="#F6F6F6"/>
<rect x="1077" y="21" width="1" height="611" fill="#A8A8A8"/>
<rect x="1078" y="0" width="2" height="632" fill="#D8DCE2"/>
<rect x="1078" y="0" width="2" height="3" fill="#404850"/>
<rect x="0" y="628" width="1080" height="2" fill="#F6F6F6"/>
<rect x="0" y="630" width="1080" height="1" fill="#7C8EB2"/>
<rect x="0" y="631" width="1080" height="1" fill="#B8C0C8"/>
<rect x="0" y="628" width="1" height="4" fill="#303030"/>
<text x="30" y="16" fill="#0A0A80" font-size="12.5" font-weight="bold" text-anchor="start" textLength="71.5" lengthAdjust="spacingAndGlyphs" stroke="#0A0A80" stroke-width="0.3">AUDUSD,H4</text>
<rect x="7.5" y="4.5" width="11" height="8" fill="#FFFFF4" stroke="#3F80E6" stroke-width="1.3"/>
<rect x="10.5" y="9.5" width="10" height="8" fill="#FFFFF4" stroke="#3F80E6" stroke-width="1.3"/>
<polyline points="12.3,12.4 14.4,15.4 16.4,12.4 18.5,15.4" fill="none" stroke="#3F80E6" stroke-width="1.2" shape-rendering="auto"/>
<polyline points="9.1,8.3 10.4,7.3 13,7.3 14.7,9.3" fill="none" stroke="#3F80E6" stroke-width="1.2" shape-rendering="auto"/>
<path d="M990.5,0 H1037 V15.5 H994.5 Q990.5,15.5 990.5,11.5 Z" fill="#DCE1E8" stroke="#66768E" stroke-width="1.2" shape-rendering="auto"/>
<rect x="992" y="8" width="45" height="7" fill="#C2CAD4"/>
<rect x="1014" y="1" width="1" height="14" fill="#F0F2F5"/>
<rect x="997.5" y="9.5" width="10" height="4" rx="1" fill="#F8F8F8" stroke="#404858" stroke-width="1.2" shape-rendering="auto"/>
<rect x="1018.5" y="3.5" width="11" height="9" rx="1" fill="#F8F8F8" stroke="#404858" stroke-width="1.2" shape-rendering="auto"/>
<rect x="1021" y="6" width="6" height="4" fill="none" stroke="#404858" stroke-width="1.2" shape-rendering="auto"/>
<defs><linearGradient id="cg" x1="0" y1="0" x2="0" y2="1"><stop offset="0" stop-color="#EDB4A4"/><stop offset="0.45" stop-color="#E49A86"/><stop offset="0.5" stop-color="#CC5232"/><stop offset="0.8" stop-color="#D86A4C"/><stop offset="1" stop-color="#E89A84"/></linearGradient></defs>
<path d="M1037,0 H1075 V16 H1037 Z" fill="url(#cg)"/>
<rect x="1037" y="16" width="38" height="1" fill="#8A4A3A"/>
<path d="M1052.5,4.5 L1059.5,11.5 M1059.5,4.5 L1052.5,11.5" stroke="#3A3A48" stroke-width="3.8" stroke-linecap="round" shape-rendering="auto"/>
<path d="M1052.5,4.5 L1059.5,11.5 M1059.5,4.5 L1052.5,11.5" stroke="#FFFFFF" stroke-width="2.2" stroke-linecap="round" shape-rendering="auto"/>
<path d="M824,26 L833,26 L828.5,31 Z" fill="#8494A8"/>
</svg></body></html>
